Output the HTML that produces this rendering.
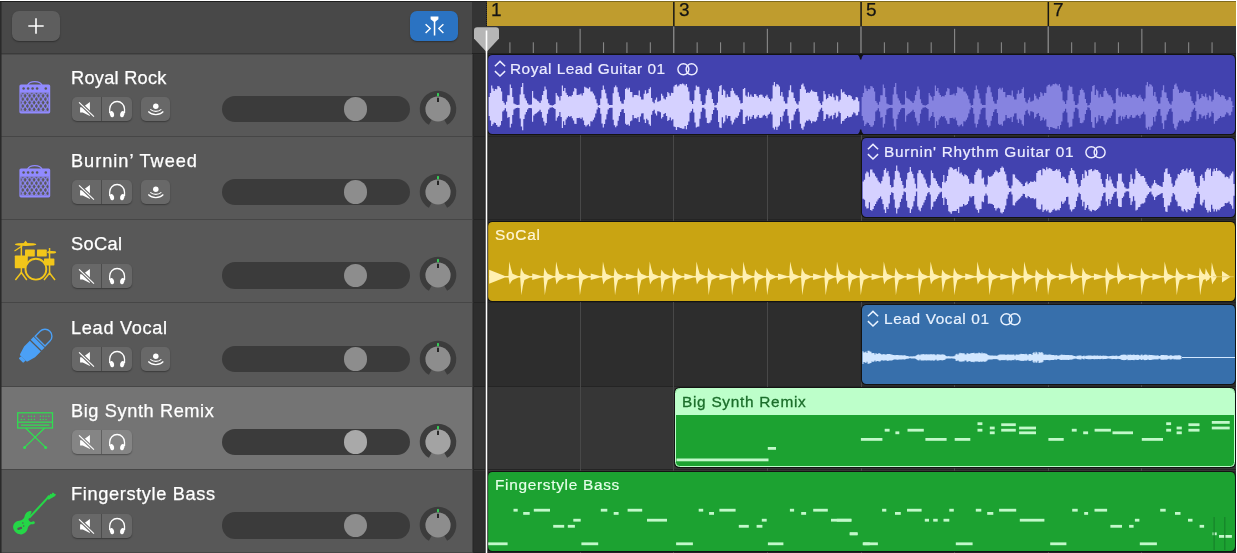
<!DOCTYPE html>
<html lang="en"><head><meta charset="utf-8"><title>Tracks</title>
<style>
html,body{margin:0;padding:0;background:#2d2d2d;}
body{width:1237px;height:553px;overflow:hidden;position:relative;font-family:"Liberation Sans",sans-serif;}
.abs{position:absolute;}
#left{position:absolute;left:0;top:0;width:472px;height:553px;background:#585858;overflow:hidden;}
#lhead{position:absolute;left:0;top:0;width:100%;height:53.5px;background:#484848;}
.row{position:absolute;left:0;width:472px;height:83.4px;background:#585858;}
.row.sel{background:#747474;}
.sep{position:absolute;left:0;width:472px;height:1.1px;background:#464646;}
.tname{position:absolute;left:70.5px;top:12.4px;will-change:transform;font-size:18.2px;line-height:24px;color:#ffffff;white-space:nowrap;-webkit-text-stroke:0.25px #ffffff;}
.btn{position:absolute;background:#686868;border-radius:5px;box-shadow:0 1px 1.5px rgba(0,0,0,.35);}
.slider{position:absolute;left:222.2px;top:42.3px;width:187.6px;height:26.3px;border-radius:13.2px;background:#3b3b3b;}
.thumb{position:absolute;left:343.6px;top:43.7px;width:23.6px;height:23.6px;border-radius:50%;background:#8d8d8d;}
.rname{position:absolute;will-change:transform;font-size:15.4px;line-height:20px;color:#ececff;white-space:nowrap;-webkit-text-stroke:0.2px currentColor;}
.region{position:absolute;border-radius:4.5px;overflow:hidden;box-shadow:0 0 0 1.1px #131313;}
svg{position:absolute;overflow:visible;}
</style></head><body>

<div class="abs" style="left:472.0px;top:0;width:765.0px;height:553px;background:#2d2d2d;"></div>
<div class="abs" style="left:472.0px;top:387.3px;width:765.0px;height:83.3px;background:#363636;"></div>
<div class="abs" style="left:472.0px;top:135.6px;width:765.0px;height:1.1px;background:#242424;"></div>
<div class="abs" style="left:472.0px;top:219.0px;width:765.0px;height:1.1px;background:#242424;"></div>
<div class="abs" style="left:472.0px;top:302.3px;width:765.0px;height:1.1px;background:#242424;"></div>
<div class="abs" style="left:472.0px;top:385.7px;width:765.0px;height:1.1px;background:#242424;"></div>
<div class="abs" style="left:472.0px;top:469.0px;width:765.0px;height:1.1px;background:#242424;"></div>
<div class="abs" style="left:472.0px;top:552.3px;width:765.0px;height:1.1px;background:#242424;"></div>
<div class="abs" style="left:579.6px;top:53px;width:1px;height:500px;background:#484848;"></div>
<div class="abs" style="left:673.2px;top:53px;width:1px;height:500px;background:#484848;"></div>
<div class="abs" style="left:766.9px;top:53px;width:1px;height:500px;background:#484848;"></div>
<div class="abs" style="left:860.5px;top:53px;width:1px;height:500px;background:#484848;"></div>
<div class="abs" style="left:954.1px;top:53px;width:1px;height:500px;background:#484848;"></div>
<div class="abs" style="left:1047.7px;top:53px;width:1px;height:500px;background:#484848;"></div>
<div class="abs" style="left:1141.3px;top:53px;width:1px;height:500px;background:#484848;"></div>
<div class="abs" style="left:472px;top:54px;width:1px;height:499px;background:#3e3e3e;"></div><div class="abs" style="left:473px;top:54px;width:1px;height:499px;background:#292929;"></div>
<div class="abs" style="left:487.2px;top:53px;width:1.2px;height:500px;background:#1c1c1c;"></div>
<div class="abs" style="left:472.0px;top:0;width:15.0px;height:53.5px;background:#343434;"></div>
<div class="abs" style="left:487.0px;top:0;width:750.0px;height:53.5px;background:#333333;"></div>
<div class="abs" style="left:487.0px;top:1px;width:750.0px;height:25px;background:#bf9c2e;"></div>
<div class="abs" style="left:0;top:1px;width:1237px;height:1px;background:#262626;"></div>
<div class="abs" style="left:472.0px;top:52.6px;width:765.0px;height:1.6px;background:#222222;"></div>
<svg class="abs" style="left:0;top:0" width="1237" height="54" viewBox="0 0 1237 54"><rect x="509.35" y="42.3" width="1.1" height="10.7" fill="#868686"/><rect x="532.76" y="42.3" width="1.1" height="10.7" fill="#868686"/><rect x="556.17" y="42.3" width="1.1" height="10.7" fill="#868686"/><rect x="579.57" y="28.8" width="1.1" height="24.2" fill="#8a8a8a"/><rect x="602.98" y="42.3" width="1.1" height="10.7" fill="#868686"/><rect x="626.38" y="42.3" width="1.1" height="10.7" fill="#868686"/><rect x="649.79" y="42.3" width="1.1" height="10.7" fill="#868686"/><rect x="673.09" y="1" width="1.5" height="25.4" fill="#161616"/><rect x="673.09" y="26.4" width="1.3" height="26.6" fill="#8c8c8c"/><rect x="696.60" y="42.3" width="1.1" height="10.7" fill="#868686"/><rect x="720.00" y="42.3" width="1.1" height="10.7" fill="#868686"/><rect x="743.41" y="42.3" width="1.1" height="10.7" fill="#868686"/><rect x="766.81" y="28.8" width="1.1" height="24.2" fill="#8a8a8a"/><rect x="790.22" y="42.3" width="1.1" height="10.7" fill="#868686"/><rect x="813.62" y="42.3" width="1.1" height="10.7" fill="#868686"/><rect x="837.03" y="42.3" width="1.1" height="10.7" fill="#868686"/><rect x="860.33" y="1" width="1.5" height="25.4" fill="#161616"/><rect x="860.33" y="26.4" width="1.3" height="26.6" fill="#8c8c8c"/><rect x="883.84" y="42.3" width="1.1" height="10.7" fill="#868686"/><rect x="907.24" y="42.3" width="1.1" height="10.7" fill="#868686"/><rect x="930.65" y="42.3" width="1.1" height="10.7" fill="#868686"/><rect x="954.05" y="28.8" width="1.1" height="24.2" fill="#8a8a8a"/><rect x="977.46" y="42.3" width="1.1" height="10.7" fill="#868686"/><rect x="1000.86" y="42.3" width="1.1" height="10.7" fill="#868686"/><rect x="1024.27" y="42.3" width="1.1" height="10.7" fill="#868686"/><rect x="1047.57" y="1" width="1.5" height="25.4" fill="#161616"/><rect x="1047.57" y="26.4" width="1.3" height="26.6" fill="#8c8c8c"/><rect x="1071.08" y="42.3" width="1.1" height="10.7" fill="#868686"/><rect x="1094.48" y="42.3" width="1.1" height="10.7" fill="#868686"/><rect x="1117.88" y="42.3" width="1.1" height="10.7" fill="#868686"/><rect x="1141.29" y="28.8" width="1.1" height="24.2" fill="#8a8a8a"/><rect x="1164.70" y="42.3" width="1.1" height="10.7" fill="#868686"/><rect x="1188.10" y="42.3" width="1.1" height="10.7" fill="#868686"/><rect x="1211.51" y="42.3" width="1.1" height="10.7" fill="#868686"/></svg>
<div class="abs" style="left:490.6px;top:0.3px;font-size:19px;line-height:20px;color:#141414;-webkit-text-stroke:0.25px #141414;will-change:transform;">1</div>
<div class="abs" style="left:678.8px;top:0.3px;font-size:19px;line-height:20px;color:#141414;-webkit-text-stroke:0.25px #141414;will-change:transform;">3</div>
<div class="abs" style="left:866.1px;top:0.3px;font-size:19px;line-height:20px;color:#141414;-webkit-text-stroke:0.25px #141414;will-change:transform;">5</div>
<div class="abs" style="left:1053.3px;top:0.3px;font-size:19px;line-height:20px;color:#141414;-webkit-text-stroke:0.25px #141414;will-change:transform;">7</div>
<div class="region" style="left:488.2px;top:55.0px;width:746.8px;height:79.0px;background:#4242af;"><svg style="left:5.4px;top:6.2px" width="12" height="16" viewBox="0 0 12 16"><path d="M0.9 5.2L6 0.4L11.1 5.2M0.9 10.1L6 15L11.1 10.1" fill="none" stroke="#ececff" stroke-width="1.5" stroke-linejoin="miter"/></svg><div class="rname" style="left:22.3px;top:3.7px;letter-spacing:0.505px;">Royal Lead Guitar 01</div><svg style="left:188.4px;top:7.8px" width="22" height="13" viewBox="0 0 22 13"><circle cx="6.4" cy="6.3" r="5.5" fill="none" stroke="#ececff" stroke-width="1.45"/><circle cx="14.6" cy="6.3" r="5.5" fill="none" stroke="#ececff" stroke-width="1.45"/></svg><svg style="left:0;top:0" width="746.8" height="79"><path d="M0.6 51.4L0.6 42.1L1.8 42.1L1.8 37.9L3.1 37.9L3.1 30.6L4.3 30.6L4.3 33.5L5.6 33.5L5.6 36.0L6.8 36.0L6.8 33.9L8.0 33.9L8.0 34.2L9.3 34.2L9.3 30.9L10.5 30.9L10.5 31.4L11.8 31.4L11.8 32.9L13.0 32.9L13.0 36.4L14.2 36.4L14.2 46.0L15.5 46.0L15.5 47.8L16.7 47.8L16.7 49.7L18.0 49.7L18.0 46.7L19.2 46.7L19.2 40.2L20.4 40.2L20.4 40.2L21.7 40.2L21.7 29.4L22.9 29.4L22.9 33.0L24.2 33.0L24.2 42.1L25.4 42.1L25.4 48.4L26.6 48.4L26.6 49.3L27.9 49.3L27.9 49.7L29.1 49.7L29.1 49.9L30.4 49.9L30.4 49.8L31.6 49.8L31.6 39.4L32.8 39.4L32.8 32.1L34.1 32.1L34.1 27.9L35.3 27.9L35.3 39.2L36.6 39.2L36.6 43.3L37.8 43.3L37.8 45.5L39.0 45.5L39.0 48.2L40.3 48.2L40.3 49.8L41.5 49.8L41.5 49.8L42.8 49.8L42.8 49.6L44.0 49.6L44.0 36.0L45.2 36.0L45.2 42.7L46.5 42.7L46.5 43.7L47.7 43.7L47.7 44.6L49.0 44.6L49.0 45.8L50.2 45.8L50.2 46.6L51.4 46.6L51.4 48.0L52.7 48.0L52.7 45.6L53.9 45.6L53.9 40.1L55.2 40.1L55.2 35.9L56.4 35.9L56.4 31.5L57.6 31.5L57.6 34.6L58.9 34.6L58.9 44.2L60.1 44.2L60.1 48.3L61.4 48.3L61.4 50.0L62.6 50.0L62.6 50.3L63.8 50.3L63.8 50.6L65.1 50.6L65.1 49.9L66.3 49.9L66.3 48.9L67.6 48.9L67.6 37.9L68.8 37.9L68.8 40.6L70.0 40.6L70.0 41.7L71.3 41.7L71.3 45.6L72.5 45.6L72.5 41.1L73.8 41.1L73.8 30.6L75.0 30.6L75.0 36.0L76.2 36.0L76.2 33.0L77.5 33.0L77.5 37.7L78.7 37.7L78.7 40.1L80.0 40.1L80.0 41.8L81.2 41.8L81.2 41.0L82.4 41.0L82.4 41.6L83.7 41.6L83.7 40.0L84.9 40.0L84.9 36.6L86.2 36.6L86.2 33.0L87.4 33.0L87.4 33.8L88.6 33.8L88.6 39.9L89.9 39.9L89.9 39.7L91.1 39.7L91.1 39.5L92.4 39.5L92.4 38.6L93.6 38.6L93.6 40.5L94.8 40.5L94.8 37.9L96.1 37.9L96.1 31.8L97.3 31.8L97.3 32.6L98.6 32.6L98.6 33.3L99.8 33.3L99.8 33.7L101.0 33.7L101.0 32.3L102.3 32.3L102.3 36.5L103.5 36.5L103.5 36.4L104.8 36.4L104.8 38.6L106.0 38.6L106.0 40.4L107.2 40.4L107.2 44.3L108.5 44.3L108.5 48.3L109.7 48.3L109.7 50.5L111.0 50.5L111.0 49.9L112.2 49.9L112.2 43.6L113.4 43.6L113.4 34.9L114.7 34.9L114.7 30.5L115.9 30.5L115.9 34.5L117.2 34.5L117.2 38.3L118.4 38.3L118.4 43.4L119.6 43.4L119.6 48.4L120.9 48.4L120.9 49.9L122.1 49.9L122.1 50.0L123.4 50.0L123.4 50.0L124.6 50.0L124.6 38.2L125.8 38.2L125.8 32.3L127.1 32.3L127.1 30.5L128.3 30.5L128.3 32.3L129.6 32.3L129.6 37.2L130.8 37.2L130.8 41.7L132.0 41.7L132.0 46.2L133.3 46.2L133.3 48.5L134.5 48.5L134.5 48.7L135.8 48.7L135.8 44.8L137.0 44.8L137.0 34.1L138.2 34.1L138.2 32.8L139.5 32.8L139.5 34.4L140.7 34.4L140.7 32.8L142.0 32.8L142.0 36.9L143.2 36.9L143.2 37.0L144.4 37.0L144.4 42.2L145.7 42.2L145.7 39.9L146.9 39.9L146.9 40.1L148.2 40.1L148.2 39.9L149.4 39.9L149.4 40.6L150.6 40.6L150.6 35.6L151.9 35.6L151.9 41.8L153.1 41.8L153.1 44.6L154.4 44.6L154.4 44.5L155.6 44.5L155.6 38.8L156.8 38.8L156.8 35.2L158.1 35.2L158.1 38.8L159.3 38.8L159.3 38.1L160.6 38.1L160.6 33.9L161.8 33.9L161.8 32.3L163.0 32.3L163.0 43.1L164.3 43.1L164.3 46.7L165.5 46.7L165.5 48.2L166.8 48.2L166.8 44.8L168.0 44.8L168.0 42.5L169.2 42.5L169.2 46.7L170.5 46.7L170.5 46.3L171.7 46.3L171.7 45.4L173.0 45.4L173.0 38.8L174.2 38.8L174.2 40.7L175.4 40.7L175.4 43.4L176.7 43.4L176.7 44.4L177.9 44.4L177.9 42.1L179.2 42.1L179.2 37.1L180.4 37.1L180.4 38.3L181.6 38.3L181.6 40.7L182.9 40.7L182.9 37.8L184.1 37.8L184.1 38.1L185.4 38.1L185.4 31.5L186.6 31.5L186.6 30.0L187.8 30.0L187.8 29.4L189.1 29.4L189.1 31.4L190.3 31.4L190.3 30.4L191.6 30.4L191.6 28.9L192.8 28.9L192.8 29.3L194.0 29.3L194.0 28.5L195.3 28.5L195.3 29.3L196.5 29.3L196.5 30.5L197.8 30.5L197.8 28.9L199.0 28.9L199.0 32.2L200.2 32.2L200.2 36.6L201.5 36.6L201.5 45.2L202.7 45.2L202.7 46.5L204.0 46.5L204.0 49.1L205.2 49.1L205.2 45.2L206.4 45.2L206.4 35.3L207.7 35.3L207.7 30.4L208.9 30.4L208.9 31.8L210.2 31.8L210.2 31.8L211.4 31.8L211.4 39.0L212.6 39.0L212.6 46.3L213.9 46.3L213.9 49.9L215.1 49.9L215.1 50.1L216.4 50.1L216.4 48.6L217.6 48.6L217.6 40.2L218.8 40.2L218.8 35.0L220.1 35.0L220.1 33.4L221.3 33.4L221.3 34.9L222.6 34.9L222.6 37.4L223.8 37.4L223.8 44.1L225.0 44.1L225.0 47.9L226.3 47.9L226.3 50.5L227.5 50.5L227.5 50.0L228.8 50.0L228.8 47.7L230.0 47.7L230.0 36.5L231.2 36.5L231.2 31.1L232.5 31.1L232.5 30.0L233.7 30.0L233.7 40.0L235.0 40.0L235.0 34.6L236.2 34.6L236.2 35.8L237.4 35.8L237.4 42.6L238.7 42.6L238.7 39.3L239.9 39.3L239.9 41.8L241.2 41.8L241.2 42.0L242.4 42.0L242.4 35.9L243.6 35.9L243.6 33.1L244.9 33.1L244.9 35.7L246.1 35.7L246.1 38.5L247.4 38.5L247.4 40.3L248.6 40.3L248.6 40.2L249.8 40.2L249.8 42.3L251.1 42.3L251.1 45.2L252.3 45.2L252.3 48.6L253.6 48.6L253.6 47.9L254.8 47.9L254.8 33.9L256.0 33.9L256.0 32.9L257.3 32.9L257.3 40.6L258.5 40.6L258.5 41.8L259.8 41.8L259.8 37.3L261.0 37.3L261.0 41.7L262.2 41.7L262.2 39.6L263.5 39.6L263.5 41.5L264.7 41.5L264.7 42.1L266.0 42.1L266.0 39.0L267.2 39.0L267.2 39.3L268.4 39.3L268.4 41.0L269.7 41.0L269.7 42.5L270.9 42.5L270.9 40.0L272.2 40.0L272.2 39.6L273.4 39.6L273.4 39.7L274.6 39.7L274.6 41.8L275.9 41.8L275.9 43.1L277.1 43.1L277.1 41.3L278.4 41.3L278.4 39.7L279.6 39.7L279.6 42.5L280.8 42.5L280.8 44.0L282.1 44.0L282.1 46.2L283.3 46.2L283.3 43.4L284.6 43.4L284.6 30.3L285.8 30.3L285.8 27.0L287.0 27.0L287.0 31.6L288.3 31.6L288.3 28.9L289.5 28.9L289.5 29.8L290.8 29.8L290.8 31.6L292.0 31.6L292.0 40.7L293.2 40.7L293.2 36.9L294.5 36.9L294.5 41.8L295.7 41.8L295.7 46.2L297.0 46.2L297.0 48.4L298.2 48.4L298.2 48.6L299.4 48.6L299.4 42.2L300.7 42.2L300.7 35.3L301.9 35.3L301.9 30.2L303.2 30.2L303.2 37.2L304.4 37.2L304.4 37.4L305.6 37.4L305.6 43.0L306.9 43.0L306.9 46.3L308.1 46.3L308.1 48.6L309.4 48.6L309.4 49.7L310.6 49.7L310.6 46.2L311.8 46.2L311.8 34.0L313.1 34.0L313.1 29.8L314.3 29.8L314.3 28.5L315.6 28.5L315.6 31.4L316.8 31.4L316.8 34.4L318.0 34.4L318.0 38.0L319.3 38.0L319.3 37.3L320.5 37.3L320.5 38.0L321.8 38.0L321.8 36.4L323.0 36.4L323.0 34.7L324.2 34.7L324.2 36.3L325.5 36.3L325.5 36.8L326.7 36.8L326.7 37.0L328.0 37.0L328.0 36.9L329.2 36.9L329.2 41.3L330.4 41.3L330.4 46.0L331.7 46.0L331.7 48.3L332.9 48.3L332.9 50.0L334.2 50.0L334.2 46.5L335.4 46.5L335.4 36.1L336.6 36.1L336.6 39.3L337.9 39.3L337.9 44.2L339.1 44.2L339.1 43.1L340.4 43.1L340.4 39.1L341.6 39.1L341.6 41.0L342.8 41.0L342.8 41.8L344.1 41.8L344.1 38.4L345.3 38.4L345.3 42.2L346.6 42.2L346.6 45.2L347.8 45.2L347.8 40.6L349.0 40.6L349.0 41.3L350.3 41.3L350.3 46.4L351.5 46.4L351.5 44.7L352.8 44.7L352.8 34.3L354.0 34.3L354.0 37.5L355.2 37.5L355.2 36.8L356.5 36.8L356.5 39.1L357.7 39.1L357.7 40.1L359.0 40.1L359.0 41.8L360.2 41.8L360.2 40.1L361.4 40.1L361.4 40.2L362.7 40.2L362.7 41.3L363.9 41.3L363.9 43.9L365.2 43.9L365.2 45.4L366.4 45.4L366.4 44.8L367.6 44.8L367.6 41.9L368.9 41.9L368.9 42.5L370.1 42.5L370.1 46.2L371.4 46.2L371.4 51.4L371.4 56.7L370.1 56.7L370.1 60.3L368.9 60.3L368.9 60.4L367.6 60.4L367.6 58.2L366.4 58.2L366.4 57.3L365.2 57.3L365.2 59.4L363.9 59.4L363.9 61.7L362.7 61.7L362.7 62.0L361.4 62.0L361.4 62.4L360.2 62.4L360.2 61.0L359.0 61.0L359.0 63.1L357.7 63.1L357.7 63.9L356.5 63.9L356.5 65.8L355.2 65.8L355.2 65.9L354.0 65.9L354.0 68.7L352.8 68.7L352.8 58.1L351.5 58.1L351.5 56.4L350.3 56.4L350.3 61.4L349.0 61.4L349.0 62.8L347.8 62.8L347.8 57.7L346.6 57.7L346.6 60.1L345.3 60.1L345.3 64.3L344.1 64.3L344.1 60.6L342.8 60.6L342.8 61.3L341.6 61.3L341.6 63.2L340.4 63.2L340.4 59.5L339.1 59.5L339.1 59.2L337.9 59.2L337.9 64.0L336.6 64.0L336.6 66.0L335.4 66.0L335.4 56.1L334.2 56.1L334.2 52.8L332.9 52.8L332.9 54.6L331.7 54.6L331.7 56.8L330.4 56.8L330.4 61.9L329.2 61.9L329.2 65.4L328.0 65.4L328.0 66.7L326.7 66.7L326.7 66.6L325.5 66.6L325.5 66.2L324.2 66.2L324.2 68.2L323.0 68.2L323.0 65.7L321.8 65.7L321.8 64.5L320.5 64.5L320.5 65.9L319.3 65.9L319.3 65.4L318.0 65.4L318.0 67.6L316.8 67.6L316.8 71.6L315.6 71.6L315.6 74.7L314.3 74.7L314.3 73.3L313.1 73.3L313.1 68.7L311.8 68.7L311.8 56.7L310.6 56.7L310.6 53.2L309.4 53.2L309.4 54.1L308.1 54.1L308.1 56.4L306.9 56.4L306.9 59.4L305.6 59.4L305.6 65.2L304.4 65.2L304.4 65.5L303.2 65.5L303.2 74.0L301.9 74.0L301.9 68.3L300.7 68.3L300.7 60.8L299.4 60.8L299.4 54.1L298.2 54.1L298.2 54.2L297.0 54.2L297.0 56.6L295.7 56.6L295.7 60.8L294.5 60.8L294.5 66.5L293.2 66.5L293.2 61.9L292.0 61.9L292.0 70.6L290.8 70.6L290.8 71.8L289.5 71.8L289.5 74.9L288.3 74.9L288.3 71.8L287.0 71.8L287.0 74.4L285.8 74.4L285.8 72.8L284.6 72.8L284.6 59.6L283.3 59.6L283.3 56.8L282.1 56.8L282.1 58.8L280.8 58.8L280.8 59.8L279.6 59.8L279.6 63.3L278.4 63.3L278.4 60.9L277.1 60.9L277.1 59.7L275.9 59.7L275.9 60.5L274.6 60.5L274.6 62.5L273.4 62.5L273.4 63.1L272.2 63.1L272.2 62.8L270.9 62.8L270.9 60.0L269.7 60.0L269.7 61.8L268.4 61.8L268.4 63.8L267.2 63.8L267.2 63.6L266.0 63.6L266.0 60.1L264.7 60.1L264.7 61.8L263.5 61.8L263.5 63.9L262.2 63.9L262.2 61.5L261.0 61.5L261.0 65.5L259.8 65.5L259.8 60.8L258.5 60.8L258.5 62.0L257.3 62.0L257.3 69.1L256.0 69.1L256.0 69.1L254.8 69.1L254.8 54.8L253.6 54.8L253.6 54.2L252.3 54.2L252.3 57.3L251.1 57.3L251.1 60.7L249.8 60.7L249.8 63.0L248.6 63.0L248.6 62.6L247.4 62.6L247.4 64.5L246.1 64.5L246.1 67.4L244.9 67.4L244.9 69.4L243.6 69.4L243.6 65.8L242.4 65.8L242.4 61.0L241.2 61.0L241.2 60.9L239.9 60.9L239.9 63.5L238.7 63.5L238.7 60.3L237.4 60.3L237.4 66.6L236.2 66.6L236.2 68.2L235.0 68.2L235.0 62.3L233.7 62.3L233.7 73.0L232.5 73.0L232.5 72.5L231.2 72.5L231.2 66.9L230.0 66.9L230.0 55.2L228.8 55.2L228.8 52.8L227.5 52.8L227.5 52.3L226.3 52.3L226.3 55.0L225.0 55.0L225.0 58.9L223.8 58.9L223.8 65.2L222.6 65.2L222.6 67.6L221.3 67.6L221.3 68.3L220.1 68.3L220.1 68.0L218.8 68.0L218.8 62.8L217.6 62.8L217.6 54.2L216.4 54.2L216.4 52.7L215.1 52.7L215.1 52.8L213.9 52.8L213.9 56.7L212.6 56.7L212.6 63.7L211.4 63.7L211.4 71.4L210.2 71.4L210.2 71.8L208.9 71.8L208.9 72.4L207.7 72.4L207.7 67.5L206.4 67.5L206.4 57.6L205.2 57.6L205.2 53.7L204.0 53.7L204.0 56.2L202.7 56.2L202.7 57.7L201.5 57.7L201.5 66.5L200.2 66.5L200.2 70.0L199.0 70.0L199.0 74.2L197.8 74.2L197.8 71.1L196.5 71.1L196.5 73.8L195.3 73.8L195.3 73.8L194.0 73.8L194.0 73.2L192.8 73.2L192.8 72.9L191.6 72.9L191.6 72.2L190.3 72.2L190.3 72.0L189.1 72.0L189.1 75.1L187.8 75.1L187.8 72.0L186.6 72.0L186.6 71.5L185.4 71.5L185.4 64.2L184.1 64.2L184.1 65.5L182.9 65.5L182.9 62.5L181.6 62.5L181.6 65.1L180.4 65.1L180.4 65.9L179.2 65.9L179.2 61.1L177.9 61.1L177.9 58.1L176.7 58.1L176.7 59.1L175.4 59.1L175.4 62.1L174.2 62.1L174.2 63.5L173.0 63.5L173.0 57.3L171.7 57.3L171.7 56.6L170.5 56.6L170.5 56.3L169.2 56.3L169.2 60.4L168.0 60.4L168.0 58.4L166.8 58.4L166.8 54.7L165.5 54.7L165.5 55.9L164.3 55.9L164.3 59.8L163.0 59.8L163.0 70.7L161.8 70.7L161.8 69.3L160.6 69.3L160.6 65.3L159.3 65.3L159.3 63.7L158.1 63.7L158.1 68.0L156.8 68.0L156.8 64.4L155.6 64.4L155.6 58.3L154.4 58.3L154.4 58.4L153.1 58.4L153.1 61.4L151.9 61.4L151.9 66.9L150.6 66.9L150.6 61.9L149.4 61.9L149.4 63.4L148.2 63.4L148.2 63.1L146.9 63.1L146.9 63.3L145.7 63.3L145.7 60.1L144.4 60.1L144.4 65.6L143.2 65.6L143.2 66.3L142.0 66.3L142.0 70.7L140.7 70.7L140.7 69.2L139.5 69.2L139.5 69.9L138.2 69.9L138.2 68.8L137.0 68.8L137.0 58.1L135.8 58.1L135.8 54.1L134.5 54.1L134.5 54.4L133.3 54.4L133.3 57.0L132.0 57.0L132.0 60.9L130.8 60.9L130.8 65.7L129.6 65.7L129.6 70.8L128.3 70.8L128.3 72.3L127.1 72.3L127.1 70.3L125.8 70.3L125.8 64.8L124.6 64.8L124.6 52.8L123.4 52.8L123.4 52.8L122.1 52.8L122.1 52.9L120.9 52.9L120.9 54.4L119.6 54.4L119.6 59.3L118.4 59.3L118.4 64.6L117.2 64.6L117.2 69.0L115.9 69.0L115.9 72.4L114.7 72.4L114.7 68.6L113.4 68.6L113.4 58.8L112.2 58.8L112.2 52.9L111.0 52.9L111.0 52.3L109.7 52.3L109.7 54.6L108.5 54.6L108.5 58.4L107.2 58.4L107.2 62.5L106.0 62.5L106.0 64.7L104.8 64.7L104.8 66.4L103.5 66.4L103.5 66.3L102.3 66.3L102.3 71.2L101.0 71.2L101.0 69.2L99.8 69.2L99.8 70.3L98.6 70.3L98.6 71.4L97.3 71.4L97.3 70.0L96.1 70.0L96.1 65.4L94.8 65.4L94.8 62.4L93.6 62.4L93.6 64.1L92.4 64.1L92.4 62.8L91.1 62.8L91.1 63.1L89.9 63.1L89.9 63.1L88.6 63.1L88.6 68.9L87.4 68.9L87.4 68.8L86.2 68.8L86.2 65.5L84.9 65.5L84.9 63.3L83.7 63.3L83.7 61.0L82.4 61.0L82.4 61.9L81.2 61.9L81.2 60.9L80.0 60.9L80.0 62.4L78.7 62.4L78.7 64.4L77.5 64.4L77.5 69.9L76.2 69.9L76.2 66.2L75.0 66.2L75.0 73.1L73.8 73.1L73.8 62.1L72.5 62.1L72.5 57.1L71.3 57.1L71.3 61.0L70.0 61.0L70.0 62.6L68.8 62.6L68.8 65.7L67.6 65.7L67.6 54.0L66.3 54.0L66.3 52.9L65.1 52.9L65.1 52.2L63.8 52.2L63.8 52.5L62.6 52.5L62.6 52.7L61.4 52.7L61.4 54.6L60.1 54.6L60.1 58.7L58.9 58.7L58.9 67.9L57.6 67.9L57.6 70.4L56.4 70.4L56.4 66.4L55.2 66.4L55.2 62.7L53.9 62.7L53.9 57.1L52.7 57.1L52.7 54.8L51.4 54.8L51.4 56.2L50.2 56.2L50.2 57.2L49.0 57.2L49.0 58.2L47.7 58.2L47.7 59.0L46.5 59.0L46.5 60.4L45.2 60.4L45.2 66.7L44.0 66.7L44.0 53.2L42.8 53.2L42.8 52.9L41.5 52.9L41.5 53.1L40.3 53.1L40.3 54.5L39.0 54.5L39.0 57.1L37.8 57.1L37.8 59.6L36.6 59.6L36.6 63.9L35.3 63.9L35.3 75.3L34.1 75.3L34.1 71.5L32.8 71.5L32.8 63.4L31.6 63.4L31.6 52.9L30.4 52.9L30.4 52.8L29.1 52.8L29.1 53.1L27.9 53.1L27.9 53.5L26.6 53.5L26.6 54.4L25.4 54.4L25.4 60.0L24.2 60.0L24.2 68.8L22.9 68.8L22.9 72.4L21.7 72.4L21.7 62.0L20.4 62.0L20.4 62.8L19.2 62.8L19.2 56.4L18.0 56.4L18.0 53.2L16.7 53.2L16.7 55.2L15.5 55.2L15.5 56.6L14.2 56.6L14.2 66.1L13.0 66.1L13.0 70.3L11.8 70.3L11.8 71.7L10.5 71.7L10.5 71.7L9.3 71.7L9.3 69.9L8.0 69.9L8.0 68.0L6.8 68.0L6.8 67.6L5.6 67.6L5.6 69.3L4.3 69.3L4.3 70.9L3.1 70.9L3.1 65.4L1.8 65.4L1.8 60.9L0.6 60.9Z" fill="#d5d1ff"/><path d="M373.6 51.4L373.6 42.1L374.8 42.1L374.8 37.9L376.1 37.9L376.1 30.6L377.3 30.6L377.3 33.5L378.6 33.5L378.6 36.0L379.8 36.0L379.8 33.9L381.0 33.9L381.0 34.2L382.3 34.2L382.3 30.9L383.5 30.9L383.5 31.4L384.8 31.4L384.8 32.9L386.0 32.9L386.0 36.4L387.2 36.4L387.2 46.0L388.5 46.0L388.5 47.8L389.7 47.8L389.7 49.7L391.0 49.7L391.0 46.7L392.2 46.7L392.2 40.2L393.4 40.2L393.4 40.2L394.7 40.2L394.7 29.4L395.9 29.4L395.9 33.0L397.2 33.0L397.2 42.1L398.4 42.1L398.4 48.4L399.6 48.4L399.6 49.3L400.9 49.3L400.9 49.7L402.1 49.7L402.1 49.9L403.4 49.9L403.4 49.8L404.6 49.8L404.6 39.4L405.8 39.4L405.8 32.1L407.1 32.1L407.1 27.9L408.3 27.9L408.3 39.2L409.6 39.2L409.6 43.3L410.8 43.3L410.8 45.5L412.0 45.5L412.0 48.2L413.3 48.2L413.3 49.8L414.5 49.8L414.5 49.8L415.8 49.8L415.8 49.6L417.0 49.6L417.0 36.0L418.2 36.0L418.2 42.7L419.5 42.7L419.5 43.7L420.7 43.7L420.7 44.6L422.0 44.6L422.0 45.8L423.2 45.8L423.2 46.6L424.4 46.6L424.4 48.0L425.7 48.0L425.7 45.6L426.9 45.6L426.9 40.1L428.2 40.1L428.2 35.9L429.4 35.9L429.4 31.5L430.6 31.5L430.6 34.6L431.9 34.6L431.9 44.2L433.1 44.2L433.1 48.3L434.4 48.3L434.4 50.0L435.6 50.0L435.6 50.3L436.8 50.3L436.8 50.6L438.1 50.6L438.1 49.9L439.3 49.9L439.3 48.9L440.6 48.9L440.6 37.9L441.8 37.9L441.8 40.6L443.0 40.6L443.0 41.7L444.3 41.7L444.3 45.6L445.5 45.6L445.5 41.1L446.8 41.1L446.8 30.6L448.0 30.6L448.0 36.0L449.2 36.0L449.2 33.0L450.5 33.0L450.5 37.7L451.7 37.7L451.7 40.1L453.0 40.1L453.0 41.8L454.2 41.8L454.2 41.0L455.4 41.0L455.4 41.6L456.7 41.6L456.7 40.0L457.9 40.0L457.9 36.6L459.2 36.6L459.2 33.0L460.4 33.0L460.4 33.8L461.6 33.8L461.6 39.9L462.9 39.9L462.9 39.7L464.1 39.7L464.1 39.5L465.4 39.5L465.4 38.6L466.6 38.6L466.6 40.5L467.8 40.5L467.8 37.9L469.1 37.9L469.1 31.8L470.3 31.8L470.3 32.6L471.6 32.6L471.6 33.3L472.8 33.3L472.8 33.7L474.0 33.7L474.0 32.3L475.3 32.3L475.3 36.5L476.5 36.5L476.5 36.4L477.8 36.4L477.8 38.6L479.0 38.6L479.0 40.4L480.2 40.4L480.2 44.3L481.5 44.3L481.5 48.3L482.7 48.3L482.7 50.5L484.0 50.5L484.0 49.9L485.2 49.9L485.2 43.6L486.4 43.6L486.4 34.9L487.7 34.9L487.7 30.5L488.9 30.5L488.9 34.5L490.2 34.5L490.2 38.3L491.4 38.3L491.4 43.4L492.6 43.4L492.6 48.4L493.9 48.4L493.9 49.9L495.1 49.9L495.1 50.0L496.4 50.0L496.4 50.0L497.6 50.0L497.6 38.2L498.8 38.2L498.8 32.3L500.1 32.3L500.1 30.5L501.3 30.5L501.3 32.3L502.6 32.3L502.6 37.2L503.8 37.2L503.8 41.7L505.0 41.7L505.0 46.2L506.3 46.2L506.3 48.5L507.5 48.5L507.5 48.7L508.8 48.7L508.8 44.8L510.0 44.8L510.0 34.1L511.2 34.1L511.2 32.8L512.5 32.8L512.5 34.4L513.7 34.4L513.7 32.8L515.0 32.8L515.0 36.9L516.2 36.9L516.2 37.0L517.4 37.0L517.4 42.2L518.7 42.2L518.7 39.9L519.9 39.9L519.9 40.1L521.2 40.1L521.2 39.9L522.4 39.9L522.4 40.6L523.6 40.6L523.6 35.6L524.9 35.6L524.9 41.8L526.1 41.8L526.1 44.6L527.4 44.6L527.4 44.5L528.6 44.5L528.6 38.8L529.8 38.8L529.8 35.2L531.1 35.2L531.1 38.8L532.3 38.8L532.3 38.1L533.6 38.1L533.6 33.9L534.8 33.9L534.8 32.3L536.0 32.3L536.0 43.1L537.3 43.1L537.3 46.7L538.5 46.7L538.5 48.2L539.8 48.2L539.8 44.8L541.0 44.8L541.0 42.5L542.2 42.5L542.2 46.7L543.5 46.7L543.5 46.3L544.7 46.3L544.7 45.4L546.0 45.4L546.0 38.8L547.2 38.8L547.2 40.7L548.4 40.7L548.4 43.4L549.7 43.4L549.7 44.4L550.9 44.4L550.9 42.1L552.2 42.1L552.2 37.1L553.4 37.1L553.4 38.3L554.6 38.3L554.6 40.7L555.9 40.7L555.9 37.8L557.1 37.8L557.1 38.1L558.4 38.1L558.4 31.5L559.6 31.5L559.6 30.0L560.8 30.0L560.8 29.4L562.1 29.4L562.1 31.4L563.3 31.4L563.3 30.4L564.6 30.4L564.6 28.9L565.8 28.9L565.8 29.3L567.0 29.3L567.0 28.5L568.3 28.5L568.3 29.3L569.5 29.3L569.5 30.5L570.8 30.5L570.8 28.9L572.0 28.9L572.0 32.2L573.2 32.2L573.2 36.6L574.5 36.6L574.5 45.2L575.7 45.2L575.7 46.5L577.0 46.5L577.0 49.1L578.2 49.1L578.2 45.2L579.4 45.2L579.4 35.3L580.7 35.3L580.7 30.4L581.9 30.4L581.9 31.8L583.2 31.8L583.2 31.8L584.4 31.8L584.4 39.0L585.6 39.0L585.6 46.3L586.9 46.3L586.9 49.9L588.1 49.9L588.1 50.1L589.4 50.1L589.4 48.6L590.6 48.6L590.6 40.2L591.8 40.2L591.8 35.0L593.1 35.0L593.1 33.4L594.3 33.4L594.3 34.9L595.6 34.9L595.6 37.4L596.8 37.4L596.8 44.1L598.0 44.1L598.0 47.9L599.3 47.9L599.3 50.5L600.5 50.5L600.5 50.0L601.8 50.0L601.8 47.7L603.0 47.7L603.0 36.5L604.2 36.5L604.2 31.1L605.5 31.1L605.5 30.0L606.7 30.0L606.7 40.0L608.0 40.0L608.0 34.6L609.2 34.6L609.2 35.8L610.4 35.8L610.4 42.6L611.7 42.6L611.7 39.3L612.9 39.3L612.9 41.8L614.2 41.8L614.2 42.0L615.4 42.0L615.4 35.9L616.6 35.9L616.6 33.1L617.9 33.1L617.9 35.7L619.1 35.7L619.1 38.5L620.4 38.5L620.4 40.3L621.6 40.3L621.6 40.2L622.8 40.2L622.8 42.3L624.1 42.3L624.1 45.2L625.3 45.2L625.3 48.6L626.6 48.6L626.6 47.9L627.8 47.9L627.8 33.9L629.0 33.9L629.0 32.9L630.3 32.9L630.3 40.6L631.5 40.6L631.5 41.8L632.8 41.8L632.8 37.3L634.0 37.3L634.0 41.7L635.2 41.7L635.2 39.6L636.5 39.6L636.5 41.5L637.7 41.5L637.7 42.1L639.0 42.1L639.0 39.0L640.2 39.0L640.2 39.3L641.4 39.3L641.4 41.0L642.7 41.0L642.7 42.5L643.9 42.5L643.9 40.0L645.2 40.0L645.2 39.6L646.4 39.6L646.4 39.7L647.6 39.7L647.6 41.8L648.9 41.8L648.9 43.1L650.1 43.1L650.1 41.3L651.4 41.3L651.4 39.7L652.6 39.7L652.6 42.5L653.8 42.5L653.8 44.0L655.1 44.0L655.1 46.2L656.3 46.2L656.3 43.4L657.6 43.4L657.6 30.3L658.8 30.3L658.8 27.0L660.0 27.0L660.0 31.6L661.3 31.6L661.3 28.9L662.5 28.9L662.5 29.8L663.8 29.8L663.8 31.6L665.0 31.6L665.0 40.7L666.2 40.7L666.2 36.9L667.5 36.9L667.5 41.8L668.7 41.8L668.7 46.2L670.0 46.2L670.0 48.4L671.2 48.4L671.2 48.6L672.4 48.6L672.4 42.2L673.7 42.2L673.7 35.3L674.9 35.3L674.9 30.2L676.2 30.2L676.2 37.2L677.4 37.2L677.4 37.4L678.6 37.4L678.6 43.0L679.9 43.0L679.9 46.3L681.1 46.3L681.1 48.6L682.4 48.6L682.4 49.7L683.6 49.7L683.6 46.2L684.8 46.2L684.8 34.0L686.1 34.0L686.1 29.8L687.3 29.8L687.3 28.5L688.6 28.5L688.6 31.4L689.8 31.4L689.8 34.4L691.0 34.4L691.0 38.0L692.3 38.0L692.3 37.3L693.5 37.3L693.5 38.0L694.8 38.0L694.8 36.4L696.0 36.4L696.0 34.7L697.2 34.7L697.2 36.3L698.5 36.3L698.5 36.8L699.7 36.8L699.7 37.0L701.0 37.0L701.0 36.9L702.2 36.9L702.2 41.3L703.4 41.3L703.4 46.0L704.7 46.0L704.7 48.3L705.9 48.3L705.9 50.0L707.2 50.0L707.2 46.5L708.4 46.5L708.4 36.1L709.6 36.1L709.6 39.3L710.9 39.3L710.9 44.2L712.1 44.2L712.1 43.1L713.4 43.1L713.4 39.1L714.6 39.1L714.6 41.0L715.8 41.0L715.8 41.8L717.1 41.8L717.1 38.4L718.3 38.4L718.3 42.2L719.6 42.2L719.6 45.2L720.8 45.2L720.8 40.6L722.0 40.6L722.0 41.3L723.3 41.3L723.3 46.4L724.5 46.4L724.5 44.7L725.8 44.7L725.8 34.3L727.0 34.3L727.0 37.5L728.2 37.5L728.2 36.8L729.5 36.8L729.5 39.1L730.7 39.1L730.7 40.1L732.0 40.1L732.0 41.8L733.2 41.8L733.2 40.1L734.4 40.1L734.4 40.2L735.7 40.2L735.7 41.3L736.9 41.3L736.9 43.9L738.2 43.9L738.2 45.4L739.4 45.4L739.4 44.8L740.6 44.8L740.6 41.9L741.9 41.9L741.9 42.5L743.1 42.5L743.1 46.2L744.4 46.2L744.4 50.8L745.6 50.8L745.6 51.4L745.6 52.0L744.4 52.0L744.4 56.7L743.1 56.7L743.1 60.3L741.9 60.3L741.9 60.4L740.6 60.4L740.6 58.2L739.4 58.2L739.4 57.3L738.2 57.3L738.2 59.4L736.9 59.4L736.9 61.7L735.7 61.7L735.7 62.0L734.4 62.0L734.4 62.4L733.2 62.4L733.2 61.0L732.0 61.0L732.0 63.1L730.7 63.1L730.7 63.9L729.5 63.9L729.5 65.8L728.2 65.8L728.2 65.9L727.0 65.9L727.0 68.7L725.8 68.7L725.8 58.1L724.5 58.1L724.5 56.4L723.3 56.4L723.3 61.4L722.0 61.4L722.0 62.8L720.8 62.8L720.8 57.7L719.6 57.7L719.6 60.1L718.3 60.1L718.3 64.3L717.1 64.3L717.1 60.6L715.8 60.6L715.8 61.3L714.6 61.3L714.6 63.2L713.4 63.2L713.4 59.5L712.1 59.5L712.1 59.2L710.9 59.2L710.9 64.0L709.6 64.0L709.6 66.0L708.4 66.0L708.4 56.1L707.2 56.1L707.2 52.8L705.9 52.8L705.9 54.6L704.7 54.6L704.7 56.8L703.4 56.8L703.4 61.9L702.2 61.9L702.2 65.4L701.0 65.4L701.0 66.7L699.7 66.7L699.7 66.6L698.5 66.6L698.5 66.2L697.2 66.2L697.2 68.2L696.0 68.2L696.0 65.7L694.8 65.7L694.8 64.5L693.5 64.5L693.5 65.9L692.3 65.9L692.3 65.4L691.0 65.4L691.0 67.6L689.8 67.6L689.8 71.6L688.6 71.6L688.6 74.7L687.3 74.7L687.3 73.3L686.1 73.3L686.1 68.7L684.8 68.7L684.8 56.7L683.6 56.7L683.6 53.2L682.4 53.2L682.4 54.1L681.1 54.1L681.1 56.4L679.9 56.4L679.9 59.4L678.6 59.4L678.6 65.2L677.4 65.2L677.4 65.5L676.2 65.5L676.2 74.0L674.9 74.0L674.9 68.3L673.7 68.3L673.7 60.8L672.4 60.8L672.4 54.1L671.2 54.1L671.2 54.2L670.0 54.2L670.0 56.6L668.7 56.6L668.7 60.8L667.5 60.8L667.5 66.5L666.2 66.5L666.2 61.9L665.0 61.9L665.0 70.6L663.8 70.6L663.8 71.8L662.5 71.8L662.5 74.9L661.3 74.9L661.3 71.8L660.0 71.8L660.0 74.4L658.8 74.4L658.8 72.8L657.6 72.8L657.6 59.6L656.3 59.6L656.3 56.8L655.1 56.8L655.1 58.8L653.8 58.8L653.8 59.8L652.6 59.8L652.6 63.3L651.4 63.3L651.4 60.9L650.1 60.9L650.1 59.7L648.9 59.7L648.9 60.5L647.6 60.5L647.6 62.5L646.4 62.5L646.4 63.1L645.2 63.1L645.2 62.8L643.9 62.8L643.9 60.0L642.7 60.0L642.7 61.8L641.4 61.8L641.4 63.8L640.2 63.8L640.2 63.6L639.0 63.6L639.0 60.1L637.7 60.1L637.7 61.8L636.5 61.8L636.5 63.9L635.2 63.9L635.2 61.5L634.0 61.5L634.0 65.5L632.8 65.5L632.8 60.8L631.5 60.8L631.5 62.0L630.3 62.0L630.3 69.1L629.0 69.1L629.0 69.1L627.8 69.1L627.8 54.8L626.6 54.8L626.6 54.2L625.3 54.2L625.3 57.3L624.1 57.3L624.1 60.7L622.8 60.7L622.8 63.0L621.6 63.0L621.6 62.6L620.4 62.6L620.4 64.5L619.1 64.5L619.1 67.4L617.9 67.4L617.9 69.4L616.6 69.4L616.6 65.8L615.4 65.8L615.4 61.0L614.2 61.0L614.2 60.9L612.9 60.9L612.9 63.5L611.7 63.5L611.7 60.3L610.4 60.3L610.4 66.6L609.2 66.6L609.2 68.2L608.0 68.2L608.0 62.3L606.7 62.3L606.7 73.0L605.5 73.0L605.5 72.5L604.2 72.5L604.2 66.9L603.0 66.9L603.0 55.2L601.8 55.2L601.8 52.8L600.5 52.8L600.5 52.3L599.3 52.3L599.3 55.0L598.0 55.0L598.0 58.9L596.8 58.9L596.8 65.2L595.6 65.2L595.6 67.6L594.3 67.6L594.3 68.3L593.1 68.3L593.1 68.0L591.8 68.0L591.8 62.8L590.6 62.8L590.6 54.2L589.4 54.2L589.4 52.7L588.1 52.7L588.1 52.8L586.9 52.8L586.9 56.7L585.6 56.7L585.6 63.7L584.4 63.7L584.4 71.4L583.2 71.4L583.2 71.8L581.9 71.8L581.9 72.4L580.7 72.4L580.7 67.5L579.4 67.5L579.4 57.6L578.2 57.6L578.2 53.7L577.0 53.7L577.0 56.2L575.7 56.2L575.7 57.7L574.5 57.7L574.5 66.5L573.2 66.5L573.2 70.0L572.0 70.0L572.0 74.2L570.8 74.2L570.8 71.1L569.5 71.1L569.5 73.8L568.3 73.8L568.3 73.8L567.0 73.8L567.0 73.2L565.8 73.2L565.8 72.9L564.6 72.9L564.6 72.2L563.3 72.2L563.3 72.0L562.1 72.0L562.1 75.1L560.8 75.1L560.8 72.0L559.6 72.0L559.6 71.5L558.4 71.5L558.4 64.2L557.1 64.2L557.1 65.5L555.9 65.5L555.9 62.5L554.6 62.5L554.6 65.1L553.4 65.1L553.4 65.9L552.2 65.9L552.2 61.1L550.9 61.1L550.9 58.1L549.7 58.1L549.7 59.1L548.4 59.1L548.4 62.1L547.2 62.1L547.2 63.5L546.0 63.5L546.0 57.3L544.7 57.3L544.7 56.6L543.5 56.6L543.5 56.3L542.2 56.3L542.2 60.4L541.0 60.4L541.0 58.4L539.8 58.4L539.8 54.7L538.5 54.7L538.5 55.9L537.3 55.9L537.3 59.8L536.0 59.8L536.0 70.7L534.8 70.7L534.8 69.3L533.6 69.3L533.6 65.3L532.3 65.3L532.3 63.7L531.1 63.7L531.1 68.0L529.8 68.0L529.8 64.4L528.6 64.4L528.6 58.3L527.4 58.3L527.4 58.4L526.1 58.4L526.1 61.4L524.9 61.4L524.9 66.9L523.6 66.9L523.6 61.9L522.4 61.9L522.4 63.4L521.2 63.4L521.2 63.1L519.9 63.1L519.9 63.3L518.7 63.3L518.7 60.1L517.4 60.1L517.4 65.6L516.2 65.6L516.2 66.3L515.0 66.3L515.0 70.7L513.7 70.7L513.7 69.2L512.5 69.2L512.5 69.9L511.2 69.9L511.2 68.8L510.0 68.8L510.0 58.1L508.8 58.1L508.8 54.1L507.5 54.1L507.5 54.4L506.3 54.4L506.3 57.0L505.0 57.0L505.0 60.9L503.8 60.9L503.8 65.7L502.6 65.7L502.6 70.8L501.3 70.8L501.3 72.3L500.1 72.3L500.1 70.3L498.8 70.3L498.8 64.8L497.6 64.8L497.6 52.8L496.4 52.8L496.4 52.8L495.1 52.8L495.1 52.9L493.9 52.9L493.9 54.4L492.6 54.4L492.6 59.3L491.4 59.3L491.4 64.6L490.2 64.6L490.2 69.0L488.9 69.0L488.9 72.4L487.7 72.4L487.7 68.6L486.4 68.6L486.4 58.8L485.2 58.8L485.2 52.9L484.0 52.9L484.0 52.3L482.7 52.3L482.7 54.6L481.5 54.6L481.5 58.4L480.2 58.4L480.2 62.5L479.0 62.5L479.0 64.7L477.8 64.7L477.8 66.4L476.5 66.4L476.5 66.3L475.3 66.3L475.3 71.2L474.0 71.2L474.0 69.2L472.8 69.2L472.8 70.3L471.6 70.3L471.6 71.4L470.3 71.4L470.3 70.0L469.1 70.0L469.1 65.4L467.8 65.4L467.8 62.4L466.6 62.4L466.6 64.1L465.4 64.1L465.4 62.8L464.1 62.8L464.1 63.1L462.9 63.1L462.9 63.1L461.6 63.1L461.6 68.9L460.4 68.9L460.4 68.8L459.2 68.8L459.2 65.5L457.9 65.5L457.9 63.3L456.7 63.3L456.7 61.0L455.4 61.0L455.4 61.9L454.2 61.9L454.2 60.9L453.0 60.9L453.0 62.4L451.7 62.4L451.7 64.4L450.5 64.4L450.5 69.9L449.2 69.9L449.2 66.2L448.0 66.2L448.0 73.1L446.8 73.1L446.8 62.1L445.5 62.1L445.5 57.1L444.3 57.1L444.3 61.0L443.0 61.0L443.0 62.6L441.8 62.6L441.8 65.7L440.6 65.7L440.6 54.0L439.3 54.0L439.3 52.9L438.1 52.9L438.1 52.2L436.8 52.2L436.8 52.5L435.6 52.5L435.6 52.7L434.4 52.7L434.4 54.6L433.1 54.6L433.1 58.7L431.9 58.7L431.9 67.9L430.6 67.9L430.6 70.4L429.4 70.4L429.4 66.4L428.2 66.4L428.2 62.7L426.9 62.7L426.9 57.1L425.7 57.1L425.7 54.8L424.4 54.8L424.4 56.2L423.2 56.2L423.2 57.2L422.0 57.2L422.0 58.2L420.7 58.2L420.7 59.0L419.5 59.0L419.5 60.4L418.2 60.4L418.2 66.7L417.0 66.7L417.0 53.2L415.8 53.2L415.8 52.9L414.5 52.9L414.5 53.1L413.3 53.1L413.3 54.5L412.0 54.5L412.0 57.1L410.8 57.1L410.8 59.6L409.6 59.6L409.6 63.9L408.3 63.9L408.3 75.3L407.1 75.3L407.1 71.5L405.8 71.5L405.8 63.4L404.6 63.4L404.6 52.9L403.4 52.9L403.4 52.8L402.1 52.8L402.1 53.1L400.9 53.1L400.9 53.5L399.6 53.5L399.6 54.4L398.4 54.4L398.4 60.0L397.2 60.0L397.2 68.8L395.9 68.8L395.9 72.4L394.7 72.4L394.7 62.0L393.4 62.0L393.4 62.8L392.2 62.8L392.2 56.4L391.0 56.4L391.0 53.2L389.7 53.2L389.7 55.2L388.5 55.2L388.5 56.6L387.2 56.6L387.2 66.1L386.0 66.1L386.0 70.3L384.8 70.3L384.8 71.7L383.5 71.7L383.5 71.7L382.3 71.7L382.3 69.9L381.0 69.9L381.0 68.0L379.8 68.0L379.8 67.6L378.6 67.6L378.6 69.3L377.3 69.3L377.3 70.9L376.1 70.9L376.1 65.4L374.8 65.4L374.8 60.9L373.6 60.9Z" fill="#8683e0"/><path d="M368.10 -1Q371.70 0.3 372.00 4.6L373.40 4.6Q373.70 0.3 377.30 -1Z" fill="#121212"/><path d="M368.10 80Q371.70 78.7 372.00 74.4L373.40 74.4Q373.70 78.7 377.30 80Z" fill="#121212"/></svg></div>
<div class="region" style="left:861.5px;top:138.3px;width:373.5px;height:79.0px;background:#4242af;"><svg style="left:5.4px;top:6.2px" width="12" height="16" viewBox="0 0 12 16"><path d="M0.9 5.2L6 0.4L11.1 5.2M0.9 10.1L6 15L11.1 10.1" fill="none" stroke="#ececff" stroke-width="1.5" stroke-linejoin="miter"/></svg><div class="rname" style="left:22.3px;top:3.7px;letter-spacing:0.748px;">Burnin' Rhythm Guitar 01</div><svg style="left:223.0px;top:7.8px" width="22" height="13" viewBox="0 0 22 13"><circle cx="6.4" cy="6.3" r="5.5" fill="none" stroke="#ececff" stroke-width="1.45"/><circle cx="14.6" cy="6.3" r="5.5" fill="none" stroke="#ececff" stroke-width="1.45"/></svg><svg style="left:0;top:0" width="373.5" height="79"><path d="M0.6 52.0L0.6 43.6L1.8 43.6L1.8 41.7L3.1 41.7L3.1 35.5L4.3 35.5L4.3 33.6L5.6 33.6L5.6 34.4L6.8 34.4L6.8 38.8L8.0 38.8L8.0 31.4L9.3 31.4L9.3 31.6L10.5 31.6L10.5 34.5L11.8 34.5L11.8 35.6L13.0 35.6L13.0 38.2L14.2 38.2L14.2 39.8L15.5 39.8L15.5 42.5L16.7 42.5L16.7 44.3L18.0 44.3L18.0 45.5L19.2 45.5L19.2 43.0L20.4 43.0L20.4 38.6L21.7 38.6L21.7 32.1L22.9 32.1L22.9 30.2L24.2 30.2L24.2 34.8L25.4 34.8L25.4 33.0L26.6 33.0L26.6 38.4L27.9 38.4L27.9 47.1L29.1 47.1L29.1 49.5L30.4 49.5L30.4 49.0L31.6 49.0L31.6 41.6L32.8 41.6L32.8 32.9L34.1 32.9L34.1 27.6L35.3 27.6L35.3 32.7L36.6 32.7L36.6 34.4L37.8 34.4L37.8 39.8L39.0 39.8L39.0 43.1L40.3 43.1L40.3 46.9L41.5 46.9L41.5 50.5L42.8 50.5L42.8 49.7L44.0 49.7L44.0 41.5L45.2 41.5L45.2 35.0L46.5 35.0L46.5 33.9L47.7 33.9L47.7 29.1L49.0 29.1L49.0 33.6L50.2 33.6L50.2 35.9L51.4 35.9L51.4 40.2L52.7 40.2L52.7 45.7L53.9 45.7L53.9 50.5L55.2 50.5L55.2 35.2L56.4 35.2L56.4 32.2L57.6 32.2L57.6 31.9L58.9 31.9L58.9 35.2L60.1 35.2L60.1 36.3L61.4 36.3L61.4 39.5L62.6 39.5L62.6 41.4L63.8 41.4L63.8 45.4L65.1 45.4L65.1 48.8L66.3 48.8L66.3 50.0L67.6 50.0L67.6 47.3L68.8 47.3L68.8 32.6L70.0 32.6L70.0 35.0L71.3 35.0L71.3 40.0L72.5 40.0L72.5 40.6L73.8 40.6L73.8 43.0L75.0 43.0L75.0 45.7L76.2 45.7L76.2 47.9L77.5 47.9L77.5 49.5L78.7 49.5L78.7 50.2L80.0 50.2L80.0 44.0L81.2 44.0L81.2 36.9L82.4 36.9L82.4 44.4L83.7 44.4L83.7 43.0L84.9 43.0L84.9 38.0L86.2 38.0L86.2 31.6L87.4 31.6L87.4 29.3L88.6 29.3L88.6 29.2L89.9 29.2L89.9 30.3L91.1 30.3L91.1 31.8L92.4 31.8L92.4 31.0L93.6 31.0L93.6 30.8L94.8 30.8L94.8 33.5L96.1 33.5L96.1 29.0L97.3 29.0L97.3 35.4L98.6 35.4L98.6 34.5L99.8 34.5L99.8 36.7L101.0 36.7L101.0 38.3L102.3 38.3L102.3 36.3L103.5 36.3L103.5 37.1L104.8 37.1L104.8 38.2L106.0 38.2L106.0 40.8L107.2 40.8L107.2 45.9L108.5 45.9L108.5 44.6L109.7 44.6L109.7 45.6L111.0 45.6L111.0 45.7L112.2 45.7L112.2 37.1L113.4 37.1L113.4 33.9L114.7 33.9L114.7 32.3L115.9 32.3L115.9 30.6L117.2 30.6L117.2 31.8L118.4 31.8L118.4 31.9L119.6 31.9L119.6 40.5L120.9 40.5L120.9 39.6L122.1 39.6L122.1 46.5L123.4 46.5L123.4 48.7L124.6 48.7L124.6 46.6L125.8 46.6L125.8 37.7L127.1 37.7L127.1 38.9L128.3 38.9L128.3 38.4L129.6 38.4L129.6 37.8L130.8 37.8L130.8 36.3L132.0 36.3L132.0 34.3L133.3 34.3L133.3 32.2L134.5 32.2L134.5 33.4L135.8 33.4L135.8 34.7L137.0 34.7L137.0 34.0L138.2 34.0L138.2 29.9L139.5 29.9L139.5 28.6L140.7 28.6L140.7 29.8L142.0 29.8L142.0 33.6L143.2 33.6L143.2 36.3L144.4 36.3L144.4 42.7L145.7 42.7L145.7 47.5L146.9 47.5L146.9 50.0L148.2 50.0L148.2 50.5L149.4 50.5L149.4 47.5L150.6 47.5L150.6 36.3L151.9 36.3L151.9 36.6L153.1 36.6L153.1 39.7L154.4 39.7L154.4 41.1L155.6 41.1L155.6 42.1L156.8 42.1L156.8 43.5L158.1 43.5L158.1 44.6L159.3 44.6L159.3 46.0L160.6 46.0L160.6 48.2L161.8 48.2L161.8 48.0L163.0 48.0L163.0 44.8L164.3 44.8L164.3 43.6L165.5 43.6L165.5 46.3L166.8 46.3L166.8 45.0L168.0 45.0L168.0 43.4L169.2 43.4L169.2 43.8L170.5 43.8L170.5 44.0L171.7 44.0L171.7 42.8L173.0 42.8L173.0 43.7L174.2 43.7L174.2 35.1L175.4 35.1L175.4 32.9L176.7 32.9L176.7 32.2L177.9 32.2L177.9 32.0L179.2 32.0L179.2 37.3L180.4 37.3L180.4 30.4L181.6 30.4L181.6 31.1L182.9 31.1L182.9 32.2L184.1 32.2L184.1 29.3L185.4 29.3L185.4 31.3L186.6 31.3L186.6 30.0L187.8 30.0L187.8 30.6L189.1 30.6L189.1 31.3L190.3 31.3L190.3 33.0L191.6 33.0L191.6 33.0L192.8 33.0L192.8 32.2L194.0 32.2L194.0 31.0L195.3 31.0L195.3 32.6L196.5 32.6L196.5 31.2L197.8 31.2L197.8 33.9L199.0 33.9L199.0 40.0L200.2 40.0L200.2 38.6L201.5 38.6L201.5 39.3L202.7 39.3L202.7 41.0L204.0 41.0L204.0 44.8L205.2 44.8L205.2 45.2L206.4 45.2L206.4 37.2L207.7 37.2L207.7 33.0L208.9 33.0L208.9 30.0L210.2 30.0L210.2 32.1L211.4 32.1L211.4 32.8L212.6 32.8L212.6 36.1L213.9 36.1L213.9 41.1L215.1 41.1L215.1 45.7L216.4 45.7L216.4 49.3L217.6 49.3L217.6 48.0L218.8 48.0L218.8 42.0L220.1 42.0L220.1 36.1L221.3 36.1L221.3 40.3L222.6 40.3L222.6 32.2L223.8 32.2L223.8 33.4L225.0 33.4L225.0 37.7L226.3 37.7L226.3 32.1L227.5 32.1L227.5 31.4L228.8 31.4L228.8 31.0L230.0 31.0L230.0 33.2L231.2 33.2L231.2 32.4L232.5 32.4L232.5 31.3L233.7 31.3L233.7 32.0L235.0 32.0L235.0 32.1L236.2 32.1L236.2 33.7L237.4 33.7L237.4 34.9L238.7 34.9L238.7 41.0L239.9 41.0L239.9 45.8L241.2 45.8L241.2 49.0L242.4 49.0L242.4 49.6L243.6 49.6L243.6 41.0L244.9 41.0L244.9 36.1L246.1 36.1L246.1 42.4L247.4 42.4L247.4 38.4L248.6 38.4L248.6 41.6L249.8 41.6L249.8 45.4L251.1 45.4L251.1 48.5L252.3 48.5L252.3 50.1L253.6 50.1L253.6 50.5L254.8 50.5L254.8 43.2L256.0 43.2L256.0 35.4L257.3 35.4L257.3 35.8L258.5 35.8L258.5 35.5L259.8 35.5L259.8 43.8L261.0 43.8L261.0 45.4L262.2 45.4L262.2 49.3L263.5 49.3L263.5 50.6L264.7 50.6L264.7 50.8L266.0 50.8L266.0 50.5L267.2 50.5L267.2 44.0L268.4 44.0L268.4 36.2L269.7 36.2L269.7 40.7L270.9 40.7L270.9 45.8L272.2 45.8L272.2 41.3L273.4 41.3L273.4 30.5L274.6 30.5L274.6 32.9L275.9 32.9L275.9 35.1L277.1 35.1L277.1 36.1L278.4 36.1L278.4 38.2L279.6 38.2L279.6 38.1L280.8 38.1L280.8 38.0L282.1 38.0L282.1 40.0L283.3 40.0L283.3 43.8L284.6 43.8L284.6 46.2L285.8 46.2L285.8 48.0L287.0 48.0L287.0 49.7L288.3 49.7L288.3 50.5L289.5 50.5L289.5 47.4L290.8 47.4L290.8 45.5L292.0 45.5L292.0 42.1L293.2 42.1L293.2 45.1L294.5 45.1L294.5 46.5L295.7 46.5L295.7 46.9L297.0 46.9L297.0 47.7L298.2 47.7L298.2 48.3L299.4 48.3L299.4 49.0L300.7 49.0L300.7 44.0L301.9 44.0L301.9 34.3L303.2 34.3L303.2 30.8L304.4 30.8L304.4 30.3L305.6 30.3L305.6 35.9L306.9 35.9L306.9 35.8L308.1 35.8L308.1 38.9L309.4 38.9L309.4 45.5L310.6 45.5L310.6 48.9L311.8 48.9L311.8 47.6L313.1 47.6L313.1 42.6L314.3 42.6L314.3 40.5L315.6 40.5L315.6 35.9L316.8 35.9L316.8 36.7L318.0 36.7L318.0 35.0L319.3 35.0L319.3 31.9L320.5 31.9L320.5 31.1L321.8 31.1L321.8 33.1L323.0 33.1L323.0 32.6L324.2 32.6L324.2 30.6L325.5 30.6L325.5 34.4L326.7 34.4L326.7 31.9L328.0 31.9L328.0 30.4L329.2 30.4L329.2 33.9L330.4 33.9L330.4 33.4L331.7 33.4L331.7 38.0L332.9 38.0L332.9 44.4L334.2 44.4L334.2 48.0L335.4 48.0L335.4 50.1L336.6 50.1L336.6 47.8L337.9 47.8L337.9 38.0L339.1 38.0L339.1 36.5L340.4 36.5L340.4 39.9L341.6 39.9L341.6 42.8L342.8 42.8L342.8 33.7L344.1 33.7L344.1 31.4L345.3 31.4L345.3 29.9L346.6 29.9L346.6 31.7L347.8 31.7L347.8 30.6L349.0 30.6L349.0 37.9L350.3 37.9L350.3 33.5L351.5 33.5L351.5 30.8L352.8 30.8L352.8 33.0L354.0 33.0L354.0 30.1L355.2 30.1L355.2 32.9L356.5 32.9L356.5 32.2L357.7 32.2L357.7 33.0L359.0 33.0L359.0 34.2L360.2 34.2L360.2 35.4L361.4 35.4L361.4 36.3L362.7 36.3L362.7 39.2L363.9 39.2L363.9 38.6L365.2 38.6L365.2 39.1L366.4 39.1L366.4 40.5L367.6 40.5L367.6 37.4L368.9 37.4L368.9 35.5L370.1 35.5L370.1 33.6L371.4 33.6L371.4 46.0L372.6 46.0L372.6 52.0L372.6 57.8L371.4 57.8L371.4 70.8L370.1 70.8L370.1 67.5L368.9 67.5L368.9 65.9L367.6 65.9L367.6 63.6L366.4 63.6L366.4 64.7L365.2 64.7L365.2 65.2L363.9 65.2L363.9 65.0L362.7 65.0L362.7 68.0L361.4 68.0L361.4 68.8L360.2 68.8L360.2 69.1L359.0 69.1L359.0 70.5L357.7 70.5L357.7 72.2L356.5 72.2L356.5 71.4L355.2 71.4L355.2 73.6L354.0 73.6L354.0 71.2L352.8 71.2L352.8 73.5L351.5 73.5L351.5 70.8L350.3 70.8L350.3 66.7L349.0 66.7L349.0 73.9L347.8 73.9L347.8 72.4L346.6 72.4L346.6 74.6L345.3 74.6L345.3 72.0L344.1 72.0L344.1 69.7L342.8 69.7L342.8 61.8L341.6 61.8L341.6 64.4L340.4 64.4L340.4 67.5L339.1 67.5L339.1 66.5L337.9 66.5L337.9 56.0L336.6 56.0L336.6 53.8L335.4 53.8L335.4 56.0L334.2 56.0L334.2 59.8L332.9 59.8L332.9 65.4L331.7 65.4L331.7 70.2L330.4 70.2L330.4 70.0L329.2 70.0L329.2 72.5L328.0 72.5L328.0 71.9L326.7 71.9L326.7 71.1L325.5 71.1L325.5 74.2L324.2 74.2L324.2 72.6L323.0 72.6L323.0 70.9L321.8 70.9L321.8 73.4L320.5 73.4L320.5 72.4L319.3 72.4L319.3 68.6L318.0 68.6L318.0 67.9L316.8 67.9L316.8 68.2L315.6 68.2L315.6 63.5L314.3 63.5L314.3 61.8L313.1 61.8L313.1 56.6L311.8 56.6L311.8 55.1L310.6 55.1L310.6 58.5L309.4 58.5L309.4 64.3L308.1 64.3L308.1 67.4L306.9 67.4L306.9 67.5L305.6 67.5L305.6 74.1L304.4 74.1L304.4 73.4L303.2 73.4L303.2 69.1L301.9 69.1L301.9 60.1L300.7 60.1L300.7 55.0L299.4 55.0L299.4 55.7L298.2 55.7L298.2 56.4L297.0 56.4L297.0 56.9L295.7 56.9L295.7 57.7L294.5 57.7L294.5 58.9L293.2 58.9L293.2 61.9L292.0 61.9L292.0 58.4L290.8 58.4L290.8 56.6L289.5 56.6L289.5 53.5L288.3 53.5L288.3 54.2L287.0 54.2L287.0 55.9L285.8 55.9L285.8 57.5L284.6 57.5L284.6 60.0L283.3 60.0L283.3 64.4L282.1 64.4L282.1 65.6L280.8 65.6L280.8 65.5L279.6 65.5L279.6 66.3L278.4 66.3L278.4 69.1L277.1 69.1L277.1 69.2L275.9 69.2L275.9 71.7L274.6 71.7L274.6 72.5L273.4 72.5L273.4 62.8L272.2 62.8L272.2 58.3L270.9 58.3L270.9 63.6L269.7 63.6L269.7 67.0L268.4 67.0L268.4 60.0L267.2 60.0L267.2 53.5L266.0 53.5L266.0 53.3L264.7 53.3L264.7 53.4L263.5 53.4L263.5 54.8L262.2 54.8L262.2 58.4L261.0 58.4L261.0 60.1L259.8 60.1L259.8 69.0L258.5 69.0L258.5 69.0L257.3 69.0L257.3 68.3L256.0 68.3L256.0 60.5L254.8 60.5L254.8 53.5L253.6 53.5L253.6 53.9L252.3 53.9L252.3 55.7L251.1 55.7L251.1 58.7L249.8 58.7L249.8 62.0L248.6 62.0L248.6 66.0L247.4 66.0L247.4 61.1L246.1 61.1L246.1 67.7L244.9 67.7L244.9 63.5L243.6 63.5L243.6 54.6L242.4 54.6L242.4 55.0L241.2 55.0L241.2 58.3L239.9 58.3L239.9 62.5L238.7 62.5L238.7 68.3L237.4 68.3L237.4 69.7L236.2 69.7L236.2 70.9L235.0 70.9L235.0 71.9L233.7 71.9L233.7 73.0L232.5 73.0L232.5 72.1L231.2 72.1L231.2 71.7L230.0 71.7L230.0 73.5L228.8 73.5L228.8 72.8L227.5 72.8L227.5 71.3L226.3 71.3L226.3 67.0L225.0 67.0L225.0 69.8L223.8 69.8L223.8 71.9L222.6 71.9L222.6 63.8L221.3 63.8L221.3 68.3L220.1 68.3L220.1 61.7L218.8 61.7L218.8 56.1L217.6 56.1L217.6 54.8L216.4 54.8L216.4 58.7L215.1 58.7L215.1 63.1L213.9 63.1L213.9 68.9L212.6 68.9L212.6 71.0L211.4 71.0L211.4 71.4L210.2 71.4L210.2 73.5L208.9 73.5L208.9 71.5L207.7 71.5L207.7 66.4L206.4 66.4L206.4 58.8L205.2 58.8L205.2 59.0L204.0 59.0L204.0 62.7L202.7 62.7L202.7 64.4L201.5 64.4L201.5 66.0L200.2 66.0L200.2 63.4L199.0 63.4L199.0 70.0L197.8 70.0L197.8 72.3L196.5 72.3L196.5 71.5L195.3 71.5L195.3 72.5L194.0 72.5L194.0 72.4L192.8 72.4L192.8 70.7L191.6 70.7L191.6 72.0L190.3 72.0L190.3 73.8L189.1 73.8L189.1 74.7L187.8 74.7L187.8 74.6L186.6 74.6L186.6 71.7L185.4 71.7L185.4 73.2L184.1 73.2L184.1 71.5L182.9 71.5L182.9 72.3L181.6 72.3L181.6 74.0L180.4 74.0L180.4 66.5L179.2 66.5L179.2 71.2L177.9 71.2L177.9 71.5L176.7 71.5L176.7 71.1L175.4 71.1L175.4 69.4L174.2 69.4L174.2 60.4L173.0 60.4L173.0 61.3L171.7 61.3L171.7 59.9L170.5 59.9L170.5 60.3L169.2 60.3L169.2 60.3L168.0 60.3L168.0 59.0L166.8 59.0L166.8 58.0L165.5 58.0L165.5 60.2L164.3 60.2L164.3 59.3L163.0 59.3L163.0 56.0L161.8 56.0L161.8 55.8L160.6 55.8L160.6 58.1L159.3 58.1L159.3 59.5L158.1 59.5L158.1 60.7L156.8 60.7L156.8 61.7L155.6 61.7L155.6 63.1L154.4 63.1L154.4 64.6L153.1 64.6L153.1 67.5L151.9 67.5L151.9 67.3L150.6 67.3L150.6 56.5L149.4 56.5L149.4 53.6L148.2 53.6L148.2 54.1L146.9 54.1L146.9 56.5L145.7 56.5L145.7 60.7L144.4 60.7L144.4 67.6L143.2 67.6L143.2 71.2L142.0 71.2L142.0 73.9L140.7 73.9L140.7 75.4L139.5 75.4L139.5 74.5L138.2 74.5L138.2 70.4L137.0 70.4L137.0 69.7L135.8 69.7L135.8 70.4L134.5 70.4L134.5 72.6L133.3 72.6L133.3 70.1L132.0 70.1L132.0 67.1L130.8 67.1L130.8 65.9L129.6 65.9L129.6 65.7L128.3 65.7L128.3 65.4L127.1 65.4L127.1 65.7L125.8 65.7L125.8 57.6L124.6 57.6L124.6 55.5L123.4 55.5L123.4 57.8L122.1 57.8L122.1 64.2L120.9 64.2L120.9 63.6L119.6 63.6L119.6 71.0L118.4 71.0L118.4 71.3L117.2 71.3L117.2 74.7L115.9 74.7L115.9 72.0L114.7 72.0L114.7 70.5L113.4 70.5L113.4 66.5L112.2 66.5L112.2 58.1L111.0 58.1L111.0 58.3L109.7 58.3L109.7 59.5L108.5 59.5L108.5 58.2L107.2 58.2L107.2 63.3L106.0 63.3L106.0 66.1L104.8 66.1L104.8 66.9L103.5 66.9L103.5 67.5L102.3 67.5L102.3 66.1L101.0 66.1L101.0 68.5L99.8 68.5L99.8 68.8L98.6 68.8L98.6 68.8L97.3 68.8L97.3 74.9L96.1 74.9L96.1 71.1L94.8 71.1L94.8 72.9L93.6 72.9L93.6 72.9L92.4 72.9L92.4 73.0L91.1 73.0L91.1 73.3L89.9 73.3L89.9 75.7L88.6 75.7L88.6 74.3L87.4 74.3L87.4 73.3L86.2 73.3L86.2 67.0L84.9 67.0L84.9 61.1L83.7 61.1L83.7 59.6L82.4 59.6L82.4 67.0L81.2 67.0L81.2 60.1L80.0 60.1L80.0 53.7L78.7 53.7L78.7 54.5L77.5 54.5L77.5 56.2L76.2 56.2L76.2 58.6L75.0 58.6L75.0 61.1L73.8 61.1L73.8 63.3L72.5 63.3L72.5 63.8L71.3 63.8L71.3 68.7L70.0 68.7L70.0 71.4L68.8 71.4L68.8 56.5L67.6 56.5L67.6 54.0L66.3 54.0L66.3 55.3L65.1 55.3L65.1 58.3L63.8 58.3L63.8 62.1L62.6 62.1L62.6 64.4L61.4 64.4L61.4 67.3L60.1 67.3L60.1 69.8L58.9 69.8L58.9 73.2L57.6 73.2L57.6 71.8L56.4 71.8L56.4 68.5L55.2 68.5L55.2 53.5L53.9 53.5L53.9 58.0L52.7 58.0L52.7 63.2L51.4 63.2L51.4 68.5L50.2 68.5L50.2 71.3L49.0 71.3L49.0 75.0L47.7 75.0L47.7 69.9L46.5 69.9L46.5 69.3L45.2 69.3L45.2 62.7L44.0 62.7L44.0 54.2L42.8 54.2L42.8 53.5L41.5 53.5L41.5 57.1L40.3 57.1L40.3 60.8L39.0 60.8L39.0 63.9L37.8 63.9L37.8 69.2L36.6 69.2L36.6 70.7L35.3 70.7L35.3 75.6L34.1 75.6L34.1 69.8L32.8 69.8L32.8 61.6L31.6 61.6L31.6 55.1L30.4 55.1L30.4 54.3L29.1 54.3L29.1 57.1L27.9 57.1L27.9 65.4L26.6 65.4L26.6 71.1L25.4 71.1L25.4 69.0L24.2 69.0L24.2 74.9L22.9 74.9L22.9 71.6L21.7 71.6L21.7 66.0L20.4 66.0L20.4 61.2L19.2 61.2L19.2 58.6L18.0 58.6L18.0 60.0L16.7 60.0L16.7 61.4L15.5 61.4L15.5 63.5L14.2 63.5L14.2 65.9L13.0 65.9L13.0 67.9L11.8 67.9L11.8 70.9L10.5 70.9L10.5 72.8L9.3 72.8L9.3 72.1L8.0 72.1L8.0 64.3L6.8 64.3L6.8 70.3L5.6 70.3L5.6 70.6L4.3 70.6L4.3 68.5L3.1 68.5L3.1 61.7L1.8 61.7L1.8 60.8L0.6 60.8Z" fill="#d5d1ff"/></svg></div>
<div class="region" style="left:488.2px;top:221.7px;width:746.8px;height:79.0px;background:#c9a412;"><div class="rname" style="left:6.6px;top:3.7px;color:#fff6d6;letter-spacing:0.750px;">SoCal</div><svg style="left:0;top:0" width="746.8" height="79"><path d="M1.1 47.80L18.8 54.80L1.1 61.80ZM1 54.10H724.8V55.50H1ZM20.41 54.80L21.31 39.40L22.91 46.53L24.51 51.70L32.01 54.80L24.71 57.90L23.11 59.79L21.71 62.40ZM32.11 54.80L33.01 45.60L34.61 49.14L36.21 51.70L43.71 54.80L36.41 57.90L34.81 64.33L33.41 73.20ZM44.21 51.60L56.01 54.80L44.21 58.00ZM55.51 54.80L56.41 45.60L58.01 49.14L59.61 51.70L67.11 54.80L59.81 57.90L58.21 64.33L56.81 73.20ZM67.21 54.80L68.11 39.40L69.71 46.53L71.31 51.70L78.81 54.80L71.51 57.90L69.91 59.79L68.51 62.40ZM79.32 51.60L91.12 54.80L79.32 58.00ZM90.62 54.80L91.52 45.60L93.12 49.14L94.72 51.70L102.22 54.80L94.92 57.90L93.32 64.33L91.92 73.20ZM102.72 51.60L114.52 54.80L102.72 58.00ZM114.03 54.80L114.93 39.40L116.53 46.53L118.13 51.70L125.63 54.80L118.33 57.90L116.73 59.79L115.33 62.40ZM125.73 54.80L126.63 45.60L128.23 49.14L129.83 51.70L137.33 54.80L130.03 57.90L128.43 64.33L127.03 73.20ZM137.83 51.60L149.63 54.80L137.83 58.00ZM149.13 54.80L150.03 45.60L151.63 49.14L153.23 51.70L160.73 54.80L153.43 57.90L151.83 64.33L150.43 73.20ZM160.83 54.80L161.73 39.40L163.33 46.53L164.93 51.70L172.43 54.80L165.13 57.90L163.53 59.79L162.13 62.40ZM172.54 54.80L173.44 47.60L175.04 49.98L176.64 51.70L184.14 54.80L176.84 57.90L175.24 63.15L173.84 70.40ZM184.24 54.80L185.14 45.60L186.74 49.14L188.34 51.70L195.84 54.80L188.54 57.90L186.94 64.33L185.54 73.20ZM196.34 51.60L208.14 54.80L196.34 58.00ZM207.65 54.80L208.55 39.40L210.15 46.53L211.75 51.70L219.25 54.80L211.95 57.90L210.35 59.79L208.95 62.40ZM219.35 54.80L220.25 45.60L221.85 49.14L223.45 51.70L230.95 54.80L223.65 57.90L222.05 64.33L220.65 73.20ZM231.45 51.60L243.25 54.80L231.45 58.00ZM242.75 54.80L243.65 45.60L245.25 49.14L246.85 51.70L254.35 54.80L247.05 57.90L245.45 64.33L244.05 73.20ZM254.45 54.80L255.35 39.40L256.95 46.53L258.56 51.70L266.06 54.80L258.75 57.90L257.15 59.79L255.75 62.40ZM266.16 54.80L267.06 47.60L268.66 49.98L270.26 51.70L277.76 54.80L270.46 57.90L268.86 63.15L267.46 70.40ZM277.86 54.80L278.76 45.60L280.36 49.14L281.96 51.70L289.46 54.80L282.16 57.90L280.56 64.33L279.16 73.20ZM289.96 51.60L301.76 54.80L289.96 58.00ZM301.26 54.80L302.16 39.40L303.76 46.53L305.36 51.70L312.86 54.80L305.56 57.90L303.96 59.79L302.56 62.40ZM312.97 54.80L313.87 45.60L315.47 49.14L317.07 51.70L324.57 54.80L317.27 57.90L315.67 64.33L314.27 73.20ZM325.07 51.60L336.87 54.80L325.07 58.00ZM336.37 54.80L337.27 45.60L338.87 49.14L340.47 51.70L347.97 54.80L340.67 57.90L339.07 64.33L337.67 73.20ZM348.08 54.80L348.98 39.40L350.58 46.53L352.18 51.70L359.68 54.80L352.38 57.90L350.78 59.79L349.38 62.40ZM359.78 54.80L360.68 47.60L362.28 49.98L363.88 51.70L371.38 54.80L364.08 57.90L362.48 63.15L361.08 70.40ZM371.48 54.80L372.38 45.60L373.98 49.14L375.58 51.70L383.08 54.80L375.78 57.90L374.18 64.33L372.78 73.20ZM383.58 51.60L395.38 54.80L383.58 58.00ZM394.89 54.80L395.79 39.40L397.39 46.53L398.99 51.70L406.49 54.80L399.19 57.90L397.59 59.79L396.19 62.40ZM406.59 54.80L407.49 45.60L409.09 49.14L410.69 51.70L418.19 54.80L410.89 57.90L409.29 64.33L407.89 73.20ZM418.69 51.60L430.49 54.80L418.69 58.00ZM429.99 54.80L430.89 45.60L432.49 49.14L434.09 51.70L441.59 54.80L434.29 57.90L432.69 64.33L431.29 73.20ZM441.69 54.80L442.59 39.40L444.19 46.53L445.80 51.70L453.30 54.80L446.00 57.90L444.39 59.79L443.00 62.40ZM453.40 54.80L454.30 47.60L455.90 49.98L457.50 51.70L465.00 54.80L457.70 57.90L456.10 63.15L454.70 70.40ZM465.10 54.80L466.00 45.60L467.60 49.14L469.20 51.70L476.70 54.80L469.40 57.90L467.80 64.33L466.40 73.20ZM477.20 51.60L489.00 54.80L477.20 58.00ZM488.50 54.80L489.40 39.40L491.00 46.53L492.60 51.70L500.10 54.80L492.80 57.90L491.20 59.79L489.80 62.40ZM500.21 54.80L501.11 45.60L502.71 49.14L504.31 51.70L511.81 54.80L504.51 57.90L502.91 64.33L501.51 73.20ZM512.31 51.60L524.11 54.80L512.31 58.00ZM523.61 54.80L524.51 45.60L526.11 49.14L527.71 51.70L535.21 54.80L527.91 57.90L526.31 64.33L524.91 73.20ZM535.32 54.80L536.22 39.40L537.82 46.53L539.42 51.70L546.92 54.80L539.62 57.90L538.02 59.79L536.62 62.40ZM547.02 54.80L547.92 47.60L549.52 49.98L551.12 51.70L558.62 54.80L551.32 57.90L549.72 63.15L548.32 70.40ZM558.72 54.80L559.62 45.60L561.22 49.14L562.82 51.70L570.32 54.80L563.02 57.90L561.42 64.33L560.02 73.20ZM570.82 51.60L582.62 54.80L570.82 58.00ZM582.12 54.80L583.02 39.40L584.62 46.53L586.23 51.70L593.73 54.80L586.42 57.90L584.83 59.79L583.42 62.40ZM593.83 54.80L594.73 45.60L596.33 49.14L597.93 51.70L605.43 54.80L598.13 57.90L596.53 64.33L595.13 73.20ZM605.93 51.60L617.73 54.80L605.93 58.00ZM617.23 54.80L618.13 45.60L619.73 49.14L621.33 51.70L628.83 54.80L621.53 57.90L619.93 64.33L618.53 73.20ZM628.93 54.80L629.83 39.40L631.43 46.53L633.03 51.70L640.53 54.80L633.23 57.90L631.63 59.79L630.23 62.40ZM641.04 51.60L652.84 54.80L641.04 58.00ZM652.34 54.80L653.24 45.60L654.84 49.14L656.44 51.70L663.94 54.80L656.64 57.90L655.04 64.33L653.64 73.20ZM664.44 51.60L676.24 54.80L664.44 58.00ZM675.74 54.80L676.64 39.40L678.24 46.53L679.84 51.70L687.34 54.80L680.04 57.90L678.44 59.79L677.04 62.40ZM687.45 54.80L688.35 45.60L689.95 49.14L691.55 51.70L699.05 54.80L691.75 57.90L690.15 64.33L688.75 73.20ZM699.55 51.60L711.35 54.80L699.55 58.00ZM710.85 54.80L711.75 45.60L713.35 49.14L714.95 51.70L722.45 54.80L715.15 57.90L713.55 64.33L712.15 73.20ZM716.80 54.80L717.70 46.20L719.30 49.68L720.90 52.20L722.30 54.80L721.10 57.40L719.50 58.24L718.10 59.40ZM722.90 54.80L723.80 40.20L725.40 46.93L727.00 51.80L728.90 54.80L727.20 57.80L725.60 59.73L724.20 62.40ZM734.00 49.00L742.60 54.80L734.00 60.60Z" fill="#fff0b0"/><path d="M724.8 54.40H745.8V55.20H724.8Z" fill="#e9cf6a"/></svg></div>
<div class="region" style="left:861.5px;top:305.0px;width:373.5px;height:79.0px;background:#376fab;"><svg style="left:5.4px;top:6.2px" width="12" height="16" viewBox="0 0 12 16"><path d="M0.9 5.2L6 0.4L11.1 5.2M0.9 10.1L6 15L11.1 10.1" fill="none" stroke="#e8f2ff" stroke-width="1.5" stroke-linejoin="miter"/></svg><div class="rname" style="left:22.3px;top:3.7px;color:#e8f2ff;letter-spacing:0.625px;">Lead Vocal 01</div><svg style="left:138.2px;top:7.8px" width="22" height="13" viewBox="0 0 22 13"><circle cx="6.4" cy="6.3" r="5.5" fill="none" stroke="#e8f2ff" stroke-width="1.45"/><circle cx="14.6" cy="6.3" r="5.5" fill="none" stroke="#e8f2ff" stroke-width="1.45"/></svg><svg style="left:0;top:0" width="373.5" height="79"><path d="M0.5 52.4L0.5 46.3L1.5 46.3L1.5 47.6L2.5 47.6L2.5 47.3L3.5 47.3L3.5 46.5L4.5 46.5L4.5 48.0L5.5 48.0L5.5 45.7L6.5 45.7L6.5 45.8L7.5 45.8L7.5 46.5L8.5 46.5L8.5 46.7L9.5 46.7L9.5 48.2L10.5 48.2L10.5 48.1L11.5 48.1L11.5 48.0L12.5 48.0L12.5 49.4L13.5 49.4L13.5 48.0L14.5 48.0L14.5 49.0L15.5 49.0L15.5 48.8L16.5 48.8L16.5 48.1L17.5 48.1L17.5 48.4L18.5 48.4L18.5 49.0L19.5 49.0L19.5 49.8L20.5 49.8L20.5 48.9L21.5 48.9L21.5 49.3L22.5 49.3L22.5 49.3L23.5 49.3L23.5 49.7L24.5 49.7L24.5 48.9L25.5 48.9L25.5 49.1L26.5 49.1L26.5 49.1L27.5 49.1L27.5 49.0L28.5 49.0L28.5 49.6L29.5 49.6L29.5 49.4L30.5 49.4L30.5 49.9L31.5 49.9L31.5 50.1L32.5 50.1L32.5 50.2L33.5 50.2L33.5 50.1L34.5 50.1L34.5 50.0L35.5 50.0L35.5 50.1L36.5 50.1L36.5 50.2L37.5 50.2L37.5 50.2L38.5 50.2L38.5 50.3L39.5 50.3L39.5 50.3L40.5 50.3L40.5 50.4L41.5 50.4L41.5 50.3L42.5 50.3L42.5 50.3L43.5 50.3L43.5 50.7L44.5 50.7L44.5 51.0L45.5 51.0L45.5 51.1L46.5 51.1L46.5 51.4L47.5 51.4L47.5 51.6L48.5 51.6L48.5 51.3L49.5 51.3L49.5 51.4L50.5 51.4L50.5 51.3L51.5 51.3L51.5 51.2L52.5 51.2L52.5 51.3L53.5 51.3L53.5 50.8L54.5 50.8L54.5 50.1L55.5 50.1L55.5 49.6L56.5 49.6L56.5 49.5L57.5 49.5L57.5 50.2L58.5 50.2L58.5 49.3L59.5 49.3L59.5 49.5L60.5 49.5L60.5 49.1L61.5 49.1L61.5 49.3L62.5 49.3L62.5 49.5L63.5 49.5L63.5 49.2L64.5 49.2L64.5 49.3L65.5 49.3L65.5 49.5L66.5 49.5L66.5 49.2L67.5 49.2L67.5 49.5L68.5 49.5L68.5 49.1L69.5 49.1L69.5 49.5L70.5 49.5L70.5 49.2L71.5 49.2L71.5 49.2L72.5 49.2L72.5 49.5L73.5 49.5L73.5 50.3L74.5 50.3L74.5 49.2L75.5 49.2L75.5 49.3L76.5 49.3L76.5 49.5L77.5 49.5L77.5 49.5L78.5 49.5L78.5 49.8L79.5 49.8L79.5 49.2L80.5 49.2L80.5 49.6L81.5 49.6L81.5 49.6L82.5 49.6L82.5 49.9L83.5 49.9L83.5 50.9L84.5 50.9L84.5 51.3L85.5 51.3L85.5 51.3L86.5 51.3L86.5 51.1L87.5 51.1L87.5 51.4L88.5 51.4L88.5 51.2L89.5 51.2L89.5 51.5L90.5 51.5L90.5 51.2L91.5 51.2L91.5 51.2L92.5 51.2L92.5 50.6L93.5 50.6L93.5 49.2L94.5 49.2L94.5 48.8L95.5 48.8L95.5 49.7L96.5 49.7L96.5 48.5L97.5 48.5L97.5 47.8L98.5 47.8L98.5 48.2L99.5 48.2L99.5 48.0L100.5 48.0L100.5 48.4L101.5 48.4L101.5 48.1L102.5 48.1L102.5 49.3L103.5 49.3L103.5 49.5L104.5 49.5L104.5 48.2L105.5 48.2L105.5 48.2L106.5 48.2L106.5 48.9L107.5 48.9L107.5 48.4L108.5 48.4L108.5 48.2L109.5 48.2L109.5 48.1L110.5 48.1L110.5 48.1L111.5 48.1L111.5 47.8L112.5 47.8L112.5 48.5L113.5 48.5L113.5 48.2L114.5 48.2L114.5 48.3L115.5 48.3L115.5 48.3L116.5 48.3L116.5 47.6L117.5 47.6L117.5 47.9L118.5 47.9L118.5 48.5L119.5 48.5L119.5 47.5L120.5 47.5L120.5 48.6L121.5 48.6L121.5 48.0L122.5 48.0L122.5 48.4L123.5 48.4L123.5 48.6L124.5 48.6L124.5 49.0L125.5 49.0L125.5 50.0L126.5 50.0L126.5 50.3L127.5 50.3L127.5 50.5L128.5 50.5L128.5 50.4L129.5 50.4L129.5 50.5L130.5 50.5L130.5 50.4L131.5 50.4L131.5 50.7L132.5 50.7L132.5 50.4L133.5 50.4L133.5 50.8L134.5 50.8L134.5 50.7L135.5 50.7L135.5 50.3L136.5 50.3L136.5 49.7L137.5 49.7L137.5 49.4L138.5 49.4L138.5 49.6L139.5 49.6L139.5 49.6L140.5 49.6L140.5 49.6L141.5 49.6L141.5 49.6L142.5 49.6L142.5 49.6L143.5 49.6L143.5 50.1L144.5 50.1L144.5 49.4L145.5 49.4L145.5 49.4L146.5 49.4L146.5 49.4L147.5 49.4L147.5 49.7L148.5 49.7L148.5 49.5L149.5 49.5L149.5 49.7L150.5 49.7L150.5 49.5L151.5 49.5L151.5 49.6L152.5 49.6L152.5 50.5L153.5 50.5L153.5 49.6L154.5 49.6L154.5 49.4L155.5 49.4L155.5 49.8L156.5 49.8L156.5 49.4L157.5 49.4L157.5 49.2L158.5 49.2L158.5 48.8L159.5 48.8L159.5 48.9L160.5 48.9L160.5 48.9L161.5 48.9L161.5 49.0L162.5 49.0L162.5 49.3L163.5 49.3L163.5 48.8L164.5 48.8L164.5 49.3L165.5 49.3L165.5 50.2L166.5 50.2L166.5 48.9L167.5 48.9L167.5 49.1L168.5 49.1L168.5 49.1L169.5 49.1L169.5 50.0L170.5 50.0L170.5 48.0L171.5 48.0L171.5 47.1L172.5 47.1L172.5 48.4L173.5 48.4L173.5 46.8L174.5 46.8L174.5 47.5L175.5 47.5L175.5 49.2L176.5 49.2L176.5 47.1L177.5 47.1L177.5 47.4L178.5 47.4L178.5 47.4L179.5 47.4L179.5 47.1L180.5 47.1L180.5 48.3L181.5 48.3L181.5 49.7L182.5 49.7L182.5 49.6L183.5 49.6L183.5 49.6L184.5 49.6L184.5 49.8L185.5 49.8L185.5 49.8L186.5 49.8L186.5 49.5L187.5 49.5L187.5 49.4L188.5 49.4L188.5 49.7L189.5 49.7L189.5 49.9L190.5 49.9L190.5 49.9L191.5 49.9L191.5 49.9L192.5 49.9L192.5 50.6L193.5 50.6L193.5 49.9L194.5 49.9L194.5 50.2L195.5 50.2L195.5 50.8L196.5 50.8L196.5 50.6L197.5 50.6L197.5 50.2L198.5 50.2L198.5 49.8L199.5 49.8L199.5 49.5L200.5 49.5L200.5 50.0L201.5 50.0L201.5 49.7L202.5 49.7L202.5 49.9L203.5 49.9L203.5 49.9L204.5 49.9L204.5 50.1L205.5 50.1L205.5 49.9L206.5 49.9L206.5 49.9L207.5 49.9L207.5 50.2L208.5 50.2L208.5 50.0L209.5 50.0L209.5 50.3L210.5 50.3L210.5 50.6L211.5 50.6L211.5 51.0L212.5 51.0L212.5 51.0L213.5 51.0L213.5 51.4L214.5 51.4L214.5 50.8L215.5 50.8L215.5 50.7L216.5 50.7L216.5 50.5L217.5 50.5L217.5 50.4L218.5 50.4L218.5 50.5L219.5 50.5L219.5 51.2L220.5 51.2L220.5 50.9L221.5 50.9L221.5 50.4L222.5 50.4L222.5 51.2L223.5 51.2L223.5 50.7L224.5 50.7L224.5 50.8L225.5 50.8L225.5 50.4L226.5 50.4L226.5 50.6L227.5 50.6L227.5 50.6L228.5 50.6L228.5 50.5L229.5 50.5L229.5 50.7L230.5 50.7L230.5 50.8L231.5 50.8L231.5 50.5L232.5 50.5L232.5 50.6L233.5 50.6L233.5 50.8L234.5 50.8L234.5 50.6L235.5 50.6L235.5 50.6L236.5 50.6L236.5 50.9L237.5 50.9L237.5 50.6L238.5 50.6L238.5 50.7L239.5 50.7L239.5 50.9L240.5 50.9L240.5 50.6L241.5 50.6L241.5 50.8L242.5 50.8L242.5 50.8L243.5 50.8L243.5 50.8L244.5 50.8L244.5 51.1L245.5 51.1L245.5 51.2L246.5 51.2L246.5 51.2L247.5 51.2L247.5 51.1L248.5 51.1L248.5 51.0L249.5 51.0L249.5 50.7L250.5 50.7L250.5 50.8L251.5 50.8L251.5 50.8L252.5 50.8L252.5 50.9L253.5 50.9L253.5 50.6L254.5 50.6L254.5 50.7L255.5 50.7L255.5 51.2L256.5 51.2L256.5 51.0L257.5 51.0L257.5 50.7L258.5 50.7L258.5 50.1L259.5 50.1L259.5 49.8L260.5 49.8L260.5 49.8L261.5 49.8L261.5 49.5L262.5 49.5L262.5 49.7L263.5 49.7L263.5 49.8L264.5 49.8L264.5 50.6L265.5 50.6L265.5 49.6L266.5 49.6L266.5 49.9L267.5 49.9L267.5 49.6L268.5 49.6L268.5 49.7L269.5 49.7L269.5 50.0L270.5 50.0L270.5 49.8L271.5 49.8L271.5 49.6L272.5 49.6L272.5 50.0L273.5 50.0L273.5 50.1L274.5 50.1L274.5 49.7L275.5 49.7L275.5 49.8L276.5 49.8L276.5 50.0L277.5 50.0L277.5 50.7L278.5 50.7L278.5 49.7L279.5 49.7L279.5 49.6L280.5 49.6L280.5 50.6L281.5 50.6L281.5 49.9L282.5 49.9L282.5 49.6L283.5 49.6L283.5 49.7L284.5 49.7L284.5 49.7L285.5 49.7L285.5 50.4L286.5 50.4L286.5 49.8L287.5 49.8L287.5 50.0L288.5 50.0L288.5 49.9L289.5 49.9L289.5 50.1L290.5 50.1L290.5 50.2L291.5 50.2L291.5 50.3L292.5 50.3L292.5 50.5L293.5 50.5L293.5 50.4L294.5 50.4L294.5 50.5L295.5 50.5L295.5 50.3L296.5 50.3L296.5 51.0L297.5 51.0L297.5 51.0L298.5 51.0L298.5 50.0L299.5 50.0L299.5 50.0L300.5 50.0L300.5 50.1L301.5 50.1L301.5 50.1L302.5 50.1L302.5 50.2L303.5 50.2L303.5 50.0L304.5 50.0L304.5 50.2L305.5 50.2L305.5 50.6L306.5 50.6L306.5 51.1L307.5 51.1L307.5 50.2L308.5 50.2L308.5 50.3L309.5 50.3L309.5 50.6L310.5 50.6L310.5 51.0L311.5 51.0L311.5 50.4L312.5 50.4L312.5 50.5L313.5 50.5L313.5 50.2L314.5 50.2L314.5 50.4L315.5 50.4L315.5 50.3L316.5 50.3L316.5 50.2L317.5 50.2L317.5 50.3L318.5 50.3L318.5 50.9L319.5 50.9L319.5 52.4L319.5 53.9L318.5 53.9L318.5 54.6L317.5 54.6L317.5 54.6L316.5 54.6L316.5 54.5L315.5 54.5L315.5 54.4L314.5 54.4L314.5 54.5L313.5 54.5L313.5 54.3L312.5 54.3L312.5 54.4L311.5 54.4L311.5 53.8L310.5 53.8L310.5 54.3L309.5 54.3L309.5 54.4L308.5 54.4L308.5 54.5L307.5 54.5L307.5 53.8L306.5 53.8L306.5 54.3L305.5 54.3L305.5 54.5L304.5 54.5L304.5 54.7L303.5 54.7L303.5 54.5L302.5 54.5L302.5 54.7L301.5 54.7L301.5 54.8L300.5 54.8L300.5 54.7L299.5 54.7L299.5 54.8L298.5 54.8L298.5 53.7L297.5 53.7L297.5 53.8L296.5 53.8L296.5 54.4L295.5 54.4L295.5 54.3L294.5 54.3L294.5 54.4L293.5 54.4L293.5 54.3L292.5 54.3L292.5 54.5L291.5 54.5L291.5 54.5L290.5 54.5L290.5 54.7L289.5 54.7L289.5 54.9L288.5 54.9L288.5 54.9L287.5 54.9L287.5 55.0L286.5 55.0L286.5 54.3L285.5 54.3L285.5 55.0L284.5 55.0L284.5 55.1L283.5 55.1L283.5 55.3L282.5 55.3L282.5 55.0L281.5 55.0L281.5 54.3L280.5 54.3L280.5 55.1L279.5 55.1L279.5 55.1L278.5 55.1L278.5 54.1L277.5 54.1L277.5 54.8L276.5 54.8L276.5 55.1L275.5 55.1L275.5 55.0L274.5 55.0L274.5 54.7L273.5 54.7L273.5 54.8L272.5 54.8L272.5 55.3L271.5 55.3L271.5 55.0L270.5 55.0L270.5 54.9L269.5 54.9L269.5 55.1L268.5 55.1L268.5 55.3L267.5 55.3L267.5 55.0L266.5 55.0L266.5 55.2L265.5 55.2L265.5 54.2L264.5 54.2L264.5 55.0L263.5 55.0L263.5 55.1L262.5 55.1L262.5 55.2L261.5 55.2L261.5 55.0L260.5 55.0L260.5 54.9L259.5 54.9L259.5 54.6L258.5 54.6L258.5 54.1L257.5 54.1L257.5 53.9L256.5 53.9L256.5 53.7L255.5 53.7L255.5 54.1L254.5 54.1L254.5 54.2L253.5 54.2L253.5 53.9L252.5 53.9L252.5 54.0L251.5 54.0L251.5 54.0L250.5 54.0L250.5 54.2L249.5 54.2L249.5 53.7L248.5 53.7L248.5 53.7L247.5 53.7L247.5 53.6L246.5 53.6L246.5 53.5L245.5 53.5L245.5 53.7L244.5 53.7L244.5 53.9L243.5 53.9L243.5 54.0L242.5 54.0L242.5 54.0L241.5 54.0L241.5 54.2L240.5 54.2L240.5 53.8L239.5 53.8L239.5 54.1L238.5 54.1L238.5 54.2L237.5 54.2L237.5 54.0L236.5 54.0L236.5 54.1L235.5 54.1L235.5 54.2L234.5 54.2L234.5 54.1L233.5 54.1L233.5 54.3L232.5 54.3L232.5 54.3L231.5 54.3L231.5 54.1L230.5 54.1L230.5 54.0L229.5 54.0L229.5 54.3L228.5 54.3L228.5 54.3L227.5 54.3L227.5 54.3L226.5 54.3L226.5 54.3L225.5 54.3L225.5 54.0L224.5 54.0L224.5 54.1L223.5 54.1L223.5 53.6L222.5 53.6L222.5 54.4L221.5 54.4L221.5 54.0L220.5 54.0L220.5 53.5L219.5 53.5L219.5 54.4L218.5 54.4L218.5 54.4L217.5 54.4L217.5 54.3L216.5 54.3L216.5 54.2L215.5 54.2L215.5 54.0L214.5 54.0L214.5 53.4L213.5 53.4L213.5 53.8L212.5 53.8L212.5 53.8L211.5 53.8L211.5 54.2L210.5 54.2L210.5 54.4L209.5 54.4L209.5 54.7L208.5 54.7L208.5 54.5L207.5 54.5L207.5 54.9L206.5 54.9L206.5 55.0L205.5 55.0L205.5 54.7L204.5 54.7L204.5 54.9L203.5 54.9L203.5 54.8L202.5 54.8L202.5 55.1L201.5 55.1L201.5 54.8L200.5 54.8L200.5 55.1L199.5 55.1L199.5 55.0L198.5 55.0L198.5 54.7L197.5 54.7L197.5 54.2L196.5 54.2L196.5 54.0L195.5 54.0L195.5 54.6L194.5 54.6L194.5 55.0L193.5 55.0L193.5 54.2L192.5 54.2L192.5 55.0L191.5 55.0L191.5 54.9L190.5 54.9L190.5 55.1L189.5 55.1L189.5 55.1L188.5 55.1L188.5 55.2L187.5 55.2L187.5 55.3L186.5 55.3L186.5 54.9L185.5 54.9L185.5 55.0L184.5 55.0L184.5 55.1L183.5 55.1L183.5 55.3L182.5 55.3L182.5 55.0L181.5 55.0L181.5 56.7L180.5 56.7L180.5 57.5L179.5 57.5L179.5 57.5L178.5 57.5L178.5 57.7L177.5 57.7L177.5 57.9L176.5 57.9L176.5 55.8L175.5 55.8L175.5 57.4L174.5 57.4L174.5 57.8L173.5 57.8L173.5 56.4L172.5 56.4L172.5 58.0L171.5 58.0L171.5 56.8L170.5 56.8L170.5 55.0L169.5 55.0L169.5 55.9L168.5 55.9L168.5 55.7L167.5 55.7L167.5 56.1L166.5 56.1L166.5 54.7L165.5 54.7L165.5 55.6L164.5 55.6L164.5 55.8L163.5 55.8L163.5 55.4L162.5 55.4L162.5 55.8L161.5 55.8L161.5 55.9L160.5 55.9L160.5 55.8L159.5 55.8L159.5 55.9L158.5 55.9L158.5 55.6L157.5 55.6L157.5 55.4L156.5 55.4L156.5 55.0L155.5 55.0L155.5 55.3L154.5 55.3L154.5 55.2L153.5 55.2L153.5 54.3L152.5 54.3L152.5 55.3L151.5 55.3L151.5 55.1L150.5 55.1L150.5 55.2L149.5 55.2L149.5 55.4L148.5 55.4L148.5 55.3L147.5 55.3L147.5 55.2L146.5 55.2L146.5 55.4L145.5 55.4L145.5 55.4L144.5 55.4L144.5 54.8L143.5 54.8L143.5 55.3L142.5 55.3L142.5 55.0L141.5 55.0L141.5 55.2L140.5 55.2L140.5 55.1L139.5 55.1L139.5 55.3L138.5 55.3L138.5 55.6L137.5 55.6L137.5 55.2L136.5 55.2L136.5 54.5L135.5 54.5L135.5 54.2L134.5 54.2L134.5 54.0L133.5 54.0L133.5 54.3L132.5 54.3L132.5 54.0L131.5 54.0L131.5 54.3L130.5 54.3L130.5 54.4L129.5 54.4L129.5 54.4L128.5 54.4L128.5 54.4L127.5 54.4L127.5 54.5L126.5 54.5L126.5 54.8L125.5 54.8L125.5 55.8L124.5 55.8L124.5 56.4L123.5 56.4L123.5 56.7L122.5 56.7L122.5 56.7L121.5 56.7L121.5 56.2L120.5 56.2L120.5 56.9L119.5 56.9L119.5 56.5L118.5 56.5L118.5 56.8L117.5 56.8L117.5 56.9L116.5 56.9L116.5 56.4L115.5 56.4L115.5 56.5L114.5 56.5L114.5 56.6L113.5 56.6L113.5 56.4L112.5 56.4L112.5 57.2L111.5 57.2L111.5 56.8L110.5 56.8L110.5 56.9L109.5 56.9L109.5 56.8L108.5 56.8L108.5 56.3L107.5 56.3L107.5 55.9L106.5 55.9L106.5 56.8L105.5 56.8L105.5 56.7L104.5 56.7L104.5 55.4L103.5 55.4L103.5 55.6L102.5 55.6L102.5 56.6L101.5 56.6L101.5 56.3L100.5 56.3L100.5 56.8L99.5 56.8L99.5 56.5L98.5 56.5L98.5 56.7L97.5 56.7L97.5 56.3L96.5 56.3L96.5 55.2L95.5 55.2L95.5 55.9L94.5 55.9L94.5 55.7L93.5 55.7L93.5 54.1L92.5 54.1L92.5 53.5L91.5 53.5L91.5 53.7L90.5 53.7L90.5 53.3L89.5 53.3L89.5 53.6L88.5 53.6L88.5 53.4L87.5 53.4L87.5 53.6L86.5 53.6L86.5 53.5L85.5 53.5L85.5 53.5L84.5 53.5L84.5 53.8L83.5 53.8L83.5 54.7L82.5 54.7L82.5 55.1L81.5 55.1L81.5 55.2L80.5 55.2L80.5 55.6L79.5 55.6L79.5 55.1L78.5 55.1L78.5 55.2L77.5 55.2L77.5 55.3L76.5 55.3L76.5 55.7L75.5 55.7L75.5 55.6L74.5 55.6L74.5 54.4L73.5 54.4L73.5 55.2L72.5 55.2L72.5 55.7L71.5 55.7L71.5 55.5L70.5 55.5L70.5 55.3L69.5 55.3L69.5 55.7L68.5 55.7L68.5 55.3L67.5 55.3L67.5 55.6L66.5 55.6L66.5 55.3L65.5 55.3L65.5 55.5L64.5 55.5L64.5 55.6L63.5 55.6L63.5 55.3L62.5 55.3L62.5 55.6L61.5 55.6L61.5 55.6L60.5 55.6L60.5 55.4L59.5 55.4L59.5 55.4L58.5 55.4L58.5 54.6L57.5 54.6L57.5 55.4L56.5 55.4L56.5 55.2L55.5 55.2L55.5 54.7L54.5 54.7L54.5 54.0L53.5 54.0L53.5 53.5L52.5 53.5L52.5 53.6L51.5 53.6L51.5 53.5L50.5 53.5L50.5 53.5L49.5 53.5L49.5 53.5L48.5 53.5L48.5 53.1L47.5 53.1L47.5 53.4L46.5 53.4L46.5 53.7L45.5 53.7L45.5 53.8L44.5 53.8L44.5 54.1L43.5 54.1L43.5 54.5L42.5 54.5L42.5 54.4L41.5 54.4L41.5 54.3L40.5 54.3L40.5 54.6L39.5 54.6L39.5 54.5L38.5 54.5L38.5 54.6L37.5 54.6L37.5 54.5L36.5 54.5L36.5 54.7L35.5 54.7L35.5 54.8L34.5 54.8L34.5 54.6L33.5 54.6L33.5 54.4L32.5 54.4L32.5 54.6L31.5 54.6L31.5 55.0L30.5 55.0L30.5 55.4L29.5 55.4L29.5 55.4L28.5 55.4L28.5 55.6L27.5 55.6L27.5 55.5L26.5 55.5L26.5 55.9L25.5 55.9L25.5 55.8L24.5 55.8L24.5 55.3L23.5 55.3L23.5 55.5L22.5 55.5L22.5 55.5L21.5 55.5L21.5 55.8L20.5 55.8L20.5 55.0L19.5 55.0L19.5 55.8L18.5 55.8L18.5 56.6L17.5 56.6L17.5 56.4L16.5 56.4L16.5 55.9L15.5 55.9L15.5 55.9L14.5 55.9L14.5 56.8L13.5 56.8L13.5 55.4L12.5 55.4L12.5 56.5L11.5 56.5L11.5 56.9L10.5 56.9L10.5 56.5L9.5 56.5L9.5 58.1L8.5 58.1L8.5 58.3L7.5 58.3L7.5 58.8L6.5 58.8L6.5 58.8L5.5 58.8L5.5 56.7L4.5 56.7L4.5 58.0L3.5 58.0L3.5 57.6L2.5 57.6L2.5 56.9L1.5 56.9L1.5 58.9L0.5 58.9ZM320 51.9H373.5V52.9H320Z" fill="#d2e7ff"/></svg></div>
<div class="region" style="left:674.5px;top:388.4px;width:560.5px;height:79.0px;background:#1ca231;border:1.2px solid #bdffca;box-sizing:border-box;"><div class="abs" style="left:0;top:0;width:100%;height:25.6px;background:#bdffca;"></div><div class="rname" style="left:6.6px;top:3px;color:#1b6e2a;-webkit-text-stroke:0.3px #1b6e2a;letter-spacing:0.714px;">Big Synth Remix</div><svg style="left:0;top:0" width="560.5" height="79"><rect x="0.5" y="69.5" width="92.0" height="2.8" fill="#c2f8ca"/><rect x="91.8" y="58.0" width="8.2" height="2.8" fill="#c2f8ca"/><rect x="184.9" y="49.0" width="21.5" height="2.8" fill="#c2f8ca"/><rect x="208.7" y="39.8" width="4.9" height="2.8" fill="#c2f8ca"/><rect x="219.4" y="42.4" width="3.9" height="2.8" fill="#c2f8ca"/><rect x="231.5" y="39.8" width="16.3" height="2.8" fill="#c2f8ca"/><rect x="249.4" y="49.0" width="21.2" height="2.8" fill="#c2f8ca"/><rect x="278.7" y="49.0" width="15.6" height="2.8" fill="#c2f8ca"/><rect x="301.5" y="33.3" width="4.9" height="2.8" fill="#c2f8ca"/><rect x="301.5" y="39.8" width="4.9" height="2.8" fill="#c2f8ca"/><rect x="313.8" y="37.6" width="4.9" height="2.8" fill="#c2f8ca"/><rect x="313.8" y="42.4" width="4.9" height="2.8" fill="#c2f8ca"/><rect x="325.2" y="34.3" width="14.6" height="2.8" fill="#c2f8ca"/><rect x="325.2" y="39.8" width="14.6" height="2.8" fill="#c2f8ca"/><rect x="343.1" y="37.6" width="16.9" height="2.8" fill="#c2f8ca"/><rect x="343.1" y="42.4" width="16.9" height="2.8" fill="#c2f8ca"/><rect x="372.4" y="49.0" width="15.3" height="2.8" fill="#c2f8ca"/><rect x="395.8" y="39.8" width="4.9" height="2.8" fill="#c2f8ca"/><rect x="407.2" y="42.4" width="4.9" height="2.8" fill="#c2f8ca"/><rect x="418.6" y="39.8" width="16.3" height="2.8" fill="#c2f8ca"/><rect x="436.5" y="42.4" width="20.5" height="2.8" fill="#c2f8ca"/><rect x="465.8" y="49.0" width="21.2" height="2.8" fill="#c2f8ca"/><rect x="490.2" y="33.3" width="4.9" height="2.8" fill="#c2f8ca"/><rect x="490.2" y="39.8" width="4.9" height="2.8" fill="#c2f8ca"/><rect x="500.6" y="37.6" width="5.2" height="2.8" fill="#c2f8ca"/><rect x="500.6" y="42.4" width="5.2" height="2.8" fill="#c2f8ca"/><rect x="512.4" y="34.3" width="11.1" height="2.8" fill="#c2f8ca"/><rect x="512.4" y="39.8" width="11.1" height="2.8" fill="#c2f8ca"/><rect x="535.8" y="32.0" width="17.9" height="2.8" fill="#c2f8ca"/><rect x="535.8" y="37.6" width="17.9" height="2.8" fill="#c2f8ca"/></svg></div>
<div class="region" style="left:488.2px;top:471.7px;width:746.8px;height:79.0px;background:#1ca231;"><div class="rname" style="left:6.6px;top:3.7px;color:#e6ffe9;letter-spacing:0.700px;">Fingerstyle Bass</div><svg style="left:0;top:0" width="746.8" height="79"><rect x="25.5" y="36.8" width="4.2" height="2.8" fill="#c2f8ca"/><rect x="35.2" y="40.0" width="6.5" height="2.8" fill="#c2f8ca"/><rect x="45.8" y="36.8" width="16.2" height="2.8" fill="#c2f8ca"/><rect x="65.2" y="52.9" width="11.0" height="2.8" fill="#c2f8ca"/><rect x="79.8" y="52.9" width="7.1" height="2.8" fill="#c2f8ca"/><rect x="85.3" y="46.8" width="7.4" height="2.8" fill="#c2f8ca"/><rect x="-0.4" y="70.4" width="20.0" height="2.8" fill="#c2f8ca"/><rect x="93.4" y="70.4" width="16.8" height="2.8" fill="#c2f8ca"/><rect x="112.8" y="36.8" width="6.5" height="2.8" fill="#c2f8ca"/><rect x="125.7" y="40.0" width="4.9" height="2.8" fill="#c2f8ca"/><rect x="139.6" y="36.8" width="14.6" height="2.8" fill="#c2f8ca"/><rect x="159.0" y="46.8" width="20.0" height="2.8" fill="#c2f8ca"/><rect x="188.1" y="70.4" width="16.8" height="2.8" fill="#c2f8ca"/><rect x="210.7" y="36.8" width="4.5" height="2.8" fill="#c2f8ca"/><rect x="221.1" y="40.0" width="4.9" height="2.8" fill="#c2f8ca"/><rect x="231.4" y="36.8" width="16.2" height="2.8" fill="#c2f8ca"/><rect x="250.8" y="52.9" width="10.0" height="2.8" fill="#c2f8ca"/><rect x="268.6" y="52.9" width="5.8" height="2.8" fill="#c2f8ca"/><rect x="273.8" y="46.8" width="4.9" height="2.8" fill="#c2f8ca"/><rect x="279.9" y="70.4" width="15.5" height="2.8" fill="#c2f8ca"/><rect x="301.9" y="36.8" width="4.2" height="2.8" fill="#c2f8ca"/><rect x="313.2" y="40.0" width="4.9" height="2.8" fill="#c2f8ca"/><rect x="325.2" y="36.8" width="14.6" height="2.8" fill="#c2f8ca"/><rect x="343.0" y="46.8" width="20.4" height="2.8" fill="#c2f8ca"/><rect x="361.8" y="60.4" width="7.4" height="2.8" fill="#c2f8ca"/><rect x="374.7" y="70.4" width="7.1" height="2.8" fill="#c2f8ca"/><rect x="348.8" y="46.8" width="14.6" height="2.8" fill="#c2f8ca"/><rect x="361.7" y="60.4" width="8.1" height="2.8" fill="#c2f8ca"/><rect x="375.3" y="70.4" width="14.6" height="2.8" fill="#c2f8ca"/><rect x="394.1" y="36.8" width="4.2" height="2.8" fill="#c2f8ca"/><rect x="407.0" y="40.0" width="5.8" height="2.8" fill="#c2f8ca"/><rect x="419.0" y="36.8" width="14.6" height="2.8" fill="#c2f8ca"/><rect x="436.8" y="46.8" width="4.2" height="2.8" fill="#c2f8ca"/><rect x="445.2" y="46.8" width="4.5" height="2.8" fill="#c2f8ca"/><rect x="455.5" y="46.8" width="5.8" height="2.8" fill="#c2f8ca"/><rect x="461.3" y="36.8" width="4.5" height="2.8" fill="#c2f8ca"/><rect x="467.8" y="70.4" width="16.8" height="2.8" fill="#c2f8ca"/><rect x="487.8" y="36.8" width="5.5" height="2.8" fill="#c2f8ca"/><rect x="499.2" y="40.0" width="6.1" height="2.8" fill="#c2f8ca"/><rect x="511.1" y="36.8" width="17.1" height="2.8" fill="#c2f8ca"/><rect x="531.8" y="46.8" width="24.6" height="2.8" fill="#c2f8ca"/><rect x="562.2" y="70.4" width="16.2" height="2.8" fill="#c2f8ca"/><rect x="584.2" y="36.8" width="5.5" height="2.8" fill="#c2f8ca"/><rect x="596.2" y="40.0" width="3.9" height="2.8" fill="#c2f8ca"/><rect x="606.5" y="36.8" width="12.6" height="2.8" fill="#c2f8ca"/><rect x="622.4" y="52.9" width="11.6" height="2.8" fill="#c2f8ca"/><rect x="641.1" y="52.9" width="4.5" height="2.8" fill="#c2f8ca"/><rect x="646.9" y="46.8" width="4.5" height="2.8" fill="#c2f8ca"/><rect x="651.8" y="70.4" width="17.1" height="2.8" fill="#c2f8ca"/><rect x="672.2" y="36.8" width="5.5" height="2.8" fill="#c2f8ca"/><rect x="687.0" y="40.0" width="5.5" height="2.8" fill="#c2f8ca"/><rect x="700.0" y="46.8" width="4.5" height="2.8" fill="#c2f8ca"/><rect x="711.6" y="52.9" width="4.5" height="2.8" fill="#c2f8ca"/><rect x="724.5" y="60.4" width="4.2" height="2.8" fill="#c2f8ca"/><rect x="731.0" y="63.0" width="12.9" height="2.8" fill="#c2f8ca"/></svg><svg style="left:0;top:0" width="746.8" height="79"><rect x="725.5" y="45" width="1.2" height="33" fill="#16822a"/><rect x="736.2" y="45" width="1.2" height="33" fill="#16822a"/></svg></div>
<svg class="abs" style="left:0;top:0" width="1237" height="553"><path d="M474 30.5Q474 27.3 477.2 27.3H495.8Q499 27.3 499 30.5V38.5L486.5 52L474 38.5Z" fill="#b6b6b6"/><rect x="484.8" y="53" width="3.4" height="500" fill="#1a1a1a" opacity="0.8"/><rect x="485.7" y="30.5" width="1.6" height="523" fill="#ffffff"/></svg>
<div id="left"><div id="lhead"></div>
<div class="btn" style="left:12px;top:10.9px;width:47.8px;height:29.9px;background:#5e5e5e;border-radius:7px;"><svg style="left:16px;top:7.2px" width="16" height="16" viewBox="0 0 16 16"><path d="M8 0.3V15.7M0.3 8H15.7" stroke="#fff" stroke-width="1.6" fill="none"/></svg></div>
<div class="btn" style="left:410px;top:10.9px;width:47.6px;height:29.9px;background:#2b73c2;border-radius:7px;"><svg style="left:13.5px;top:5.5px" width="21" height="20" viewBox="0 0 21 20"><path d="M6.6 0.5H14.4V3.2L10.5 6.2L6.6 3.2Z" fill="#fff"/><rect x="9.8" y="4" width="1.5" height="15.5" fill="#fff"/><path d="M1.6 8.2L6.2 12.6L1.6 17M19.4 8.2L14.8 12.6L19.4 17" stroke="#fff" stroke-width="1.4" fill="none"/></svg></div>
<div class="row" style="top:53.3px;">
<svg style="left:19.1px;top:27.1px" width="32" height="34" viewBox="0 0 32 34">
<defs><pattern id="gr" width="4.5" height="6.8" patternUnits="userSpaceOnUse" x="1.6" y="12.4"><path d="M0 0L4.5 6.8M4.5 0L0 6.8" stroke="#918aff" stroke-width="1.15" fill="none"/></pattern></defs>
<path d="M8.6 5.2C10.6 0.4 21 0.4 23 5.2" fill="none" stroke="#918aff" stroke-width="1.3"/>
<path d="M2 4.4H29.6Q31.2 4.4 31.2 6V32Q31.2 33.4 29.6 33.4H2Q0.4 33.4 0.4 32V6Q0.4 4.4 2 4.4ZM1.6 12.8V31.2H29.8V12.8Z" fill="#918aff" fill-rule="evenodd"/>
<rect x="1.4" y="12.6" width="28.6" height="18.8" fill="url(#gr)"/>
<circle cx="4.6" cy="8.5" r="1.25" fill="#585858"/><circle cx="9.1" cy="8.5" r="1.25" fill="#585858"/><circle cx="13.6" cy="8.5" r="1.25" fill="#585858"/><circle cx="18.1" cy="8.5" r="1.25" fill="#585858"/><circle cx="26.8" cy="8.5" r="1.25" fill="#585858"/>
</svg>
<div class="tname" style="letter-spacing:0.267px;">Royal Rock</div>
<div class="btn" style="left:72px;top:43.7px;width:59.9px;height:24px;background:#686868;"><svg style="left:0;top:0" width="30" height="24" viewBox="0 0 30 24"><path d="M8.1 10.3H10.8L17.9 5.1V18.9L10.8 15.4H8.1Z" fill="#fff"/><path d="M8 6.3L21 18.8" stroke="#686868" stroke-width="3.3"/><path d="M7.05 5.35L21.95 19.7" stroke="#fff" stroke-width="1.15"/></svg><div class="abs" style="left:29.2px;top:0;width:1.1px;height:24px;background:#4c4c4c;"></div><div class="abs" style="left:30px;top:0;width:30px;height:24px;"><svg style="left:-30px;top:0" width="60" height="24" viewBox="0 0 60 24"><path d="M37.7 16V11.9A7.4 7.4 0 0 1 52.5 11.9V16" fill="none" stroke="#fff" stroke-width="1.3"/><ellipse cx="39.9" cy="17.1" rx="2.1" ry="3.2" transform="rotate(-14 39.9 17.1)" fill="#fff"/><ellipse cx="50.3" cy="17.1" rx="2.1" ry="3.2" transform="rotate(14 50.3 17.1)" fill="#fff"/></svg></div></div>
<div class="btn" style="left:140.7px;top:43.7px;width:29.6px;height:24px;background:#686868;"><svg style="left:0;top:0" width="29" height="24" viewBox="0 0 29 24"><circle cx="14.8" cy="9.2" r="2.75" fill="#fff"/><path d="M9.3 12.35A8.56 8.56 0 0 0 20.35 12.35" fill="none" stroke="#fff" stroke-width="1.15"/><path d="M7.3 14.5A10.6 10.6 0 0 0 22.35 14.5" fill="none" stroke="#fff" stroke-width="1.15"/></svg></div>
<div class="slider"></div><div class="thumb"></div>
<svg style="left:418.3px;top:35.4px" width="40" height="40" viewBox="-20 -20 40 40"><path d="M-9.15 15.85A18.3 18.3 0 1 1 9.15 15.85L6.2 10.74A12.4 12.4 0 1 0 -6.2 10.74Z" fill="#3c3c3c"/><circle cx="0" cy="0" r="12.55" fill="#8d8d8d"/><rect x="-0.95" y="-15.9" width="1.9" height="3.1" fill="#35d158"/><rect x="-0.8" y="-11.3" width="1.6" height="4.3" fill="#0c0c0c"/></svg>
</div>
<div class="row" style="top:136.6px;">
<svg style="left:19.1px;top:27.1px" width="32" height="34" viewBox="0 0 32 34">
<defs><pattern id="gr2" width="4.5" height="6.8" patternUnits="userSpaceOnUse" x="1.6" y="12.4"><path d="M0 0L4.5 6.8M4.5 0L0 6.8" stroke="#918aff" stroke-width="1.15" fill="none"/></pattern></defs>
<path d="M8.6 5.2C10.6 0.4 21 0.4 23 5.2" fill="none" stroke="#918aff" stroke-width="1.3"/>
<path d="M2 4.4H29.6Q31.2 4.4 31.2 6V32Q31.2 33.4 29.6 33.4H2Q0.4 33.4 0.4 32V6Q0.4 4.4 2 4.4ZM1.6 12.8V31.2H29.8V12.8Z" fill="#918aff" fill-rule="evenodd"/>
<rect x="1.4" y="12.6" width="28.6" height="18.8" fill="url(#gr2)"/>
<circle cx="4.6" cy="8.5" r="1.25" fill="#585858"/><circle cx="9.1" cy="8.5" r="1.25" fill="#585858"/><circle cx="13.6" cy="8.5" r="1.25" fill="#585858"/><circle cx="18.1" cy="8.5" r="1.25" fill="#585858"/><circle cx="26.8" cy="8.5" r="1.25" fill="#585858"/>
</svg>
<div class="tname" style="letter-spacing:0.975px;">Burnin’ Tweed</div>
<div class="btn" style="left:72px;top:43.7px;width:59.9px;height:24px;background:#686868;"><svg style="left:0;top:0" width="30" height="24" viewBox="0 0 30 24"><path d="M8.1 10.3H10.8L17.9 5.1V18.9L10.8 15.4H8.1Z" fill="#fff"/><path d="M8 6.3L21 18.8" stroke="#686868" stroke-width="3.3"/><path d="M7.05 5.35L21.95 19.7" stroke="#fff" stroke-width="1.15"/></svg><div class="abs" style="left:29.2px;top:0;width:1.1px;height:24px;background:#4c4c4c;"></div><div class="abs" style="left:30px;top:0;width:30px;height:24px;"><svg style="left:-30px;top:0" width="60" height="24" viewBox="0 0 60 24"><path d="M37.7 16V11.9A7.4 7.4 0 0 1 52.5 11.9V16" fill="none" stroke="#fff" stroke-width="1.3"/><ellipse cx="39.9" cy="17.1" rx="2.1" ry="3.2" transform="rotate(-14 39.9 17.1)" fill="#fff"/><ellipse cx="50.3" cy="17.1" rx="2.1" ry="3.2" transform="rotate(14 50.3 17.1)" fill="#fff"/></svg></div></div>
<div class="btn" style="left:140.7px;top:43.7px;width:29.6px;height:24px;background:#686868;"><svg style="left:0;top:0" width="29" height="24" viewBox="0 0 29 24"><circle cx="14.8" cy="9.2" r="2.75" fill="#fff"/><path d="M9.3 12.35A8.56 8.56 0 0 0 20.35 12.35" fill="none" stroke="#fff" stroke-width="1.15"/><path d="M7.3 14.5A10.6 10.6 0 0 0 22.35 14.5" fill="none" stroke="#fff" stroke-width="1.15"/></svg></div>
<div class="slider"></div><div class="thumb"></div>
<svg style="left:418.3px;top:35.4px" width="40" height="40" viewBox="-20 -20 40 40"><path d="M-9.15 15.85A18.3 18.3 0 1 1 9.15 15.85L6.2 10.74A12.4 12.4 0 1 0 -6.2 10.74Z" fill="#3c3c3c"/><circle cx="0" cy="0" r="12.55" fill="#8d8d8d"/><rect x="-0.95" y="-15.9" width="1.9" height="3.1" fill="#35d158"/><rect x="-0.8" y="-11.3" width="1.6" height="4.3" fill="#0c0c0c"/></svg>
</div>
<div class="row" style="top:220.0px;">
<svg style="left:13px;top:20px" width="46" height="44" viewBox="0 0 46 44">
<g fill="#f2c61a" stroke="none">
<ellipse cx="12.6" cy="4.4" rx="10.8" ry="1.5"/><path d="M10.6 3.2L12.6 0.6L14.6 3.2Z"/>
<rect x="7.6" y="4" width="1.5" height="29"/>
<path d="M1.2 10.6L9 5.2L9.6 6.4L1.8 11.6Z"/>
<rect x="12" y="9.6" width="9.8" height="6.8" rx="0.6"/><rect x="24" y="9.6" width="9.8" height="6.8" rx="0.6"/>
<rect x="1.8" y="15.6" width="13" height="12.6" rx="0.6"/>
<rect x="31" y="18.4" width="10.4" height="7" rx="0.6"/>
<ellipse cx="38.6" cy="12.2" rx="4.6" ry="1.3"/>
<rect x="35.8" y="8" width="1.5" height="26"/>
</g>
<circle cx="22.9" cy="29.2" r="10.4" fill="#585858" stroke="#f2c61a" stroke-width="1.9"/>
<path d="M8.35 32.5L2.4 40M8.35 32.5L13.8 40M36.55 33L31 40M36.55 33L42 40" stroke="#f2c61a" stroke-width="1.5" fill="none"/>
</svg>
<div class="tname" style="letter-spacing:0.375px;">SoCal</div>
<div class="btn" style="left:72px;top:43.7px;width:59.9px;height:24px;background:#686868;"><svg style="left:0;top:0" width="30" height="24" viewBox="0 0 30 24"><path d="M8.1 10.3H10.8L17.9 5.1V18.9L10.8 15.4H8.1Z" fill="#fff"/><path d="M8 6.3L21 18.8" stroke="#686868" stroke-width="3.3"/><path d="M7.05 5.35L21.95 19.7" stroke="#fff" stroke-width="1.15"/></svg><div class="abs" style="left:29.2px;top:0;width:1.1px;height:24px;background:#4c4c4c;"></div><div class="abs" style="left:30px;top:0;width:30px;height:24px;"><svg style="left:-30px;top:0" width="60" height="24" viewBox="0 0 60 24"><path d="M37.7 16V11.9A7.4 7.4 0 0 1 52.5 11.9V16" fill="none" stroke="#fff" stroke-width="1.3"/><ellipse cx="39.9" cy="17.1" rx="2.1" ry="3.2" transform="rotate(-14 39.9 17.1)" fill="#fff"/><ellipse cx="50.3" cy="17.1" rx="2.1" ry="3.2" transform="rotate(14 50.3 17.1)" fill="#fff"/></svg></div></div>
<div class="slider"></div><div class="thumb"></div>
<svg style="left:418.3px;top:35.4px" width="40" height="40" viewBox="-20 -20 40 40"><path d="M-9.15 15.85A18.3 18.3 0 1 1 9.15 15.85L6.2 10.74A12.4 12.4 0 1 0 -6.2 10.74Z" fill="#3c3c3c"/><circle cx="0" cy="0" r="12.55" fill="#8d8d8d"/><rect x="-0.95" y="-15.9" width="1.9" height="3.1" fill="#35d158"/><rect x="-0.8" y="-11.3" width="1.6" height="4.3" fill="#0c0c0c"/></svg>
</div>
<div class="row" style="top:303.3px;">
<svg style="left:13px;top:20px" width="46" height="46" viewBox="0 0 46 46">
<g transform="translate(21.5 23.9) rotate(44.5)" fill="#4ba0f6">
<path d="M-6.9 -8V-15A6.9 6.9 0 0 1 6.9 -15V-8Z" fill="none" stroke="#4ba0f6" stroke-width="1.4"/>
<rect x="-7.7" y="-6.5" width="15.4" height="4.1"/>
<path d="M-7.7 -1.2H7.7V7L5.2 15.2Q4.9 16.2 3.8 16.2H-3.8Q-4.9 16.2 -5.2 15.2L-7.7 7Z"/>
<rect x="-3.2" y="16" width="6.4" height="3.4" rx="0.9"/>
</g></svg>
<div class="tname" style="letter-spacing:0.678px;">Lead Vocal</div>
<div class="btn" style="left:72px;top:43.7px;width:59.9px;height:24px;background:#686868;"><svg style="left:0;top:0" width="30" height="24" viewBox="0 0 30 24"><path d="M8.1 10.3H10.8L17.9 5.1V18.9L10.8 15.4H8.1Z" fill="#fff"/><path d="M8 6.3L21 18.8" stroke="#686868" stroke-width="3.3"/><path d="M7.05 5.35L21.95 19.7" stroke="#fff" stroke-width="1.15"/></svg><div class="abs" style="left:29.2px;top:0;width:1.1px;height:24px;background:#4c4c4c;"></div><div class="abs" style="left:30px;top:0;width:30px;height:24px;"><svg style="left:-30px;top:0" width="60" height="24" viewBox="0 0 60 24"><path d="M37.7 16V11.9A7.4 7.4 0 0 1 52.5 11.9V16" fill="none" stroke="#fff" stroke-width="1.3"/><ellipse cx="39.9" cy="17.1" rx="2.1" ry="3.2" transform="rotate(-14 39.9 17.1)" fill="#fff"/><ellipse cx="50.3" cy="17.1" rx="2.1" ry="3.2" transform="rotate(14 50.3 17.1)" fill="#fff"/></svg></div></div>
<div class="btn" style="left:140.7px;top:43.7px;width:29.6px;height:24px;background:#686868;"><svg style="left:0;top:0" width="29" height="24" viewBox="0 0 29 24"><circle cx="14.8" cy="9.2" r="2.75" fill="#fff"/><path d="M9.3 12.35A8.56 8.56 0 0 0 20.35 12.35" fill="none" stroke="#fff" stroke-width="1.15"/><path d="M7.3 14.5A10.6 10.6 0 0 0 22.35 14.5" fill="none" stroke="#fff" stroke-width="1.15"/></svg></div>
<div class="slider"></div><div class="thumb"></div>
<svg style="left:418.3px;top:35.4px" width="40" height="40" viewBox="-20 -20 40 40"><path d="M-9.15 15.85A18.3 18.3 0 1 1 9.15 15.85L6.2 10.74A12.4 12.4 0 1 0 -6.2 10.74Z" fill="#3c3c3c"/><circle cx="0" cy="0" r="12.55" fill="#8d8d8d"/><rect x="-0.95" y="-15.9" width="1.9" height="3.1" fill="#35d158"/><rect x="-0.8" y="-11.3" width="1.6" height="4.3" fill="#0c0c0c"/></svg>
</div>
<div class="row sel" style="top:386.7px;">
<svg style="left:13px;top:16.9px" width="46" height="46" viewBox="0 0 46 46">
<g fill="none" stroke="#2fdf50" stroke-width="1.25">
<rect x="4.7" y="8.8" width="34.8" height="15.2"/>
<path d="M4.7 18.2H39.5M8 21H36.4"/>
<path d="M12.6 24L32.6 43.4M31.6 24L11.6 43.4"/>
</g>
<g fill="#2fdf50"><circle cx="11.6" cy="43.6" r="1.5"/><circle cx="32.6" cy="43.6" r="1.5"/>
<circle cx="9.6" cy="12.2" r="0.75"/><circle cx="15.6" cy="12.2" r="0.75"/><circle cx="18.4" cy="12.2" r="0.75"/><circle cx="21.4" cy="12.2" r="0.75"/><circle cx="27.4" cy="12.2" r="0.75"/><circle cx="30.2" cy="12.2" r="0.75"/><circle cx="33" cy="12.2" r="0.75"/><circle cx="35.8" cy="12.2" r="0.75"/>
<circle cx="8.4" cy="15.4" r="0.75"/><circle cx="11.2" cy="15.4" r="0.75"/><circle cx="15.6" cy="15.4" r="0.75"/><circle cx="18.4" cy="15.4" r="0.75"/><circle cx="21.4" cy="15.4" r="0.75"/><circle cx="27.4" cy="15.4" r="0.75"/><circle cx="30.2" cy="15.4" r="0.75"/><circle cx="33" cy="15.4" r="0.75"/></g>
</svg>
<div class="tname" style="letter-spacing:0.600px;">Big Synth Remix</div>
<div class="btn" style="left:72px;top:43.7px;width:59.9px;height:24px;background:#858585;"><svg style="left:0;top:0" width="30" height="24" viewBox="0 0 30 24"><path d="M8.1 10.3H10.8L17.9 5.1V18.9L10.8 15.4H8.1Z" fill="#fff"/><path d="M8 6.3L21 18.8" stroke="#858585" stroke-width="3.3"/><path d="M7.05 5.35L21.95 19.7" stroke="#fff" stroke-width="1.15"/></svg><div class="abs" style="left:29.2px;top:0;width:1.1px;height:24px;background:#606060;"></div><div class="abs" style="left:30px;top:0;width:30px;height:24px;"><svg style="left:-30px;top:0" width="60" height="24" viewBox="0 0 60 24"><path d="M37.7 16V11.9A7.4 7.4 0 0 1 52.5 11.9V16" fill="none" stroke="#fff" stroke-width="1.3"/><ellipse cx="39.9" cy="17.1" rx="2.1" ry="3.2" transform="rotate(-14 39.9 17.1)" fill="#fff"/><ellipse cx="50.3" cy="17.1" rx="2.1" ry="3.2" transform="rotate(14 50.3 17.1)" fill="#fff"/></svg></div></div>
<div class="slider"></div><div class="thumb" style="background:#a9a9a9"></div>
<svg style="left:418.3px;top:35.4px" width="40" height="40" viewBox="-20 -20 40 40"><path d="M-9.15 15.85A18.3 18.3 0 1 1 9.15 15.85L6.2 10.74A12.4 12.4 0 1 0 -6.2 10.74Z" fill="#3c3c3c"/><circle cx="0" cy="0" r="12.55" fill="#a3a3a3"/><rect x="-0.95" y="-15.9" width="1.9" height="3.1" fill="#35d158"/><rect x="-0.8" y="-11.3" width="1.6" height="4.3" fill="#0c0c0c"/></svg>
</div>
<div class="row" style="top:470.0px;">
<svg style="left:5px;top:15px" width="60" height="60" viewBox="0 0 60 60">
<g fill="#25d647" stroke="none">
<path d="M41.6 12.4L43.2 10.2L44.4 10.4L45.4 8.8L46.6 9.2L47.6 7.6L48.8 8L49.2 8.8L50.9 9L50.2 10.9L46.8 13.1L43.6 14.8Z"/>
<path d="M24.1 32.9L42.6 12.9" stroke="#25d647" stroke-width="2.1" fill="none"/>
<path d="M25.50 26.00C24.77 26.08 23.10 26.47 22.20 27.10C21.30 27.73 20.63 28.80 20.10 29.80C19.57 30.80 19.63 32.18 19.00 33.10C18.37 34.02 17.48 34.77 16.30 35.30C15.12 35.83 13.08 35.77 11.90 36.30C10.72 36.83 9.83 37.58 9.20 38.50C8.57 39.42 8.10 40.62 8.10 41.80C8.10 42.98 8.57 44.52 9.20 45.60C9.83 46.68 10.72 47.67 11.90 48.30C13.08 48.93 14.93 49.50 16.30 49.40C17.67 49.30 19.12 48.43 20.10 47.70C21.08 46.97 21.67 45.98 22.20 45.00C22.73 44.02 22.75 42.70 23.30 41.80C23.85 40.90 24.58 40.05 25.50 39.60C26.42 39.15 28.08 39.47 28.80 39.10C29.52 38.73 29.80 37.87 29.80 37.40C29.80 36.93 29.43 36.38 28.80 36.30C28.17 36.22 26.87 37.13 26.00 36.90C25.13 36.67 23.88 35.62 23.60 34.90C23.32 34.18 23.90 33.68 24.30 32.60C24.70 31.52 25.62 29.40 26.00 28.40C26.38 27.40 26.68 27.00 26.60 26.60C26.52 26.20 26.23 25.92 25.50 26.00Z"/>
</g>
<rect x="12.2" y="42.2" width="5" height="2.3" rx="1" transform="rotate(-18 14.7 43.3)" fill="#585858"/>
<circle cx="17.9" cy="38" r="0.75" fill="#585858"/><circle cx="18.7" cy="41" r="0.75" fill="#585858"/>
</svg>
<div class="tname" style="letter-spacing:0.640px;">Fingerstyle Bass</div>
<div class="btn" style="left:72px;top:43.7px;width:59.9px;height:24px;background:#686868;"><svg style="left:0;top:0" width="30" height="24" viewBox="0 0 30 24"><path d="M8.1 10.3H10.8L17.9 5.1V18.9L10.8 15.4H8.1Z" fill="#fff"/><path d="M8 6.3L21 18.8" stroke="#686868" stroke-width="3.3"/><path d="M7.05 5.35L21.95 19.7" stroke="#fff" stroke-width="1.15"/></svg><div class="abs" style="left:29.2px;top:0;width:1.1px;height:24px;background:#4c4c4c;"></div><div class="abs" style="left:30px;top:0;width:30px;height:24px;"><svg style="left:-30px;top:0" width="60" height="24" viewBox="0 0 60 24"><path d="M37.7 16V11.9A7.4 7.4 0 0 1 52.5 11.9V16" fill="none" stroke="#fff" stroke-width="1.3"/><ellipse cx="39.9" cy="17.1" rx="2.1" ry="3.2" transform="rotate(-14 39.9 17.1)" fill="#fff"/><ellipse cx="50.3" cy="17.1" rx="2.1" ry="3.2" transform="rotate(14 50.3 17.1)" fill="#fff"/></svg></div></div>
<div class="slider"></div><div class="thumb"></div>
<svg style="left:418.3px;top:35.4px" width="40" height="40" viewBox="-20 -20 40 40"><path d="M-9.15 15.85A18.3 18.3 0 1 1 9.15 15.85L6.2 10.74A12.4 12.4 0 1 0 -6.2 10.74Z" fill="#3c3c3c"/><circle cx="0" cy="0" r="12.55" fill="#8d8d8d"/><rect x="-0.95" y="-15.9" width="1.9" height="3.1" fill="#35d158"/><rect x="-0.8" y="-11.3" width="1.6" height="4.3" fill="#0c0c0c"/></svg>
</div>
<div class="sep" style="top:135.64px"></div>
<div class="sep" style="top:218.98px"></div>
<div class="sep" style="top:302.32px"></div>
<div class="sep" style="top:385.66px"></div>
<div class="sep" style="top:469.00px"></div>
<div class="sep" style="top:552.34px"></div>
<div class="abs" style="left:0;top:53px;width:472px;height:1px;background:#3b3b3b"></div><div class="abs" style="left:0;top:54px;width:472px;height:1px;background:#4a4a4a"></div>
<div class="abs" style="left:0;top:0;width:1px;height:553px;background:#2a2a2a"></div><div class="abs" style="left:1px;top:0;width:1px;height:553px;background:rgba(42,42,42,0.55)"></div>
</div>
<div class="abs" style="left:0;top:1px;width:487px;height:1px;background:#1e1e1e"></div><div class="abs" style="left:487px;top:1px;width:749px;height:1px;background:#806a1c"></div><div class="abs" style="left:486px;top:3px;width:0;height:23px;border-left:1px dotted #15151a"></div><div class="abs" style="left:0;top:0;width:1237px;height:1px;background:#fff"></div><div class="abs" style="left:1236px;top:0;width:1px;height:553px;background:#fff"></div>
</body></html>
